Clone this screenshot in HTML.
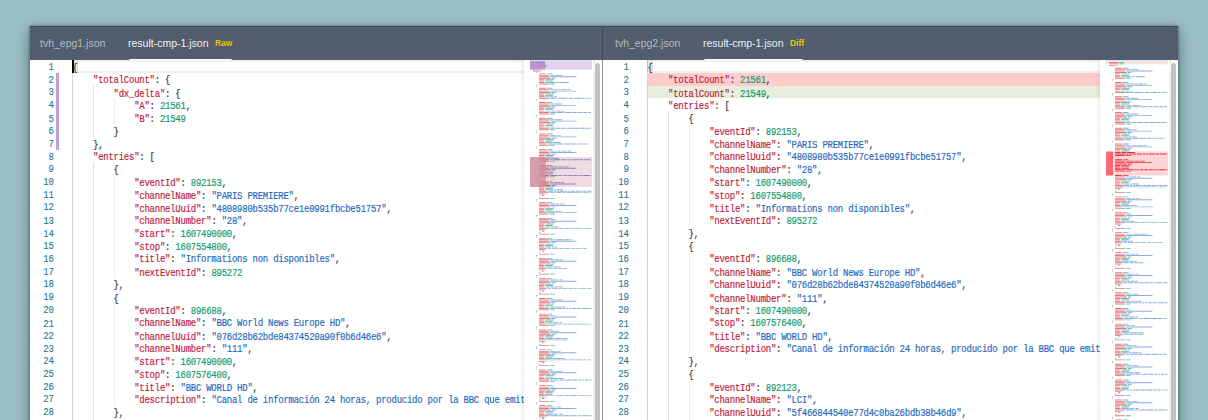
<!DOCTYPE html><html><head><meta charset="utf-8"><style>
*{margin:0;padding:0;box-sizing:border-box}
html,body{width:1208px;height:420px;overflow:hidden;background:#9abec5}
#win{position:absolute;left:30px;top:26px;width:1148px;height:420px;background:#fff;
 box-shadow:0 0 3px rgba(10,30,35,.45),0 5px 12px rgba(10,30,35,.5)}
#hdr{position:absolute;left:0;top:0;width:1148px;height:34px;background:#525e6e;border-top:1px solid #3f4a58}
.tab{position:absolute;top:0;height:34px;font:10.5px "Liberation Sans",sans-serif;line-height:14px;padding-top:9px;white-space:nowrap}
.tab.in{color:#b3b9c1}
.tab.act{color:#eceef0}
.tag{font:bold 8.4px "Liberation Sans",sans-serif;color:#e6c20c;margin-left:6.5px;position:relative;top:-1px}
.uline{position:absolute;top:31.5px;height:3px;background:#fff;border-radius:3px 3px 0 0}
.divd{position:absolute;left:572px;top:0;width:1px;height:34px;background:#3d4653}
.pane{position:absolute;top:34px;height:386px;overflow:hidden}
.lns{position:absolute;left:0;text-align:right;font:9px "Liberation Mono",monospace;letter-spacing:-0.254px;line-height:11.13px;color:#237893;-webkit-text-stroke:0.1px currentColor;transform-origin:0 0;transform:scaleY(1.15)}
.lns div{height:11.13px}
.code{position:absolute;overflow:hidden;font:9px "Liberation Mono",monospace;letter-spacing:-0.254px;line-height:11.43px;white-space:pre;color:#333;height:345px;-webkit-text-stroke:0.15px currentColor;transform-origin:0 0;transform:scaleY(1.12)}
.l{height:11.43px}
.k{color:#c0203a}.s{color:#1f68bd}.n{color:#0f9a6b}.p{color:#333}
.ig{position:absolute;width:1px;height:12.8px}
.g0{background:#d4d4d4}.g1{background:#e2e2e2}.g2{background:#ececec}
.cur{position:absolute;height:12.8px;border-top:2px solid #efefef;border-bottom:2px solid #efefef}
.pur{position:absolute;width:3px;background:#c39fd6}
.brk{position:absolute;width:5.2px;height:12.4px;background:#e1eee1;border-left:1px solid #b9c2b9;border-right:1px solid #d5ddd5}
.csr{position:absolute;top:0;width:2px;height:12.8px;background:#000}
.dbg{position:absolute;height:12.8px}
.mm{position:absolute;top:0}
.sb{position:absolute;top:2.5px;width:5px;height:400px;background:#c3c3c3;border-radius:2.5px}
.sbtrack{position:absolute;top:0;width:2px;height:386px;background:#f3f3f3}
.mmwrap{position:absolute;top:0;height:386px;background:#fff;box-shadow:-2px 0 3px rgba(0,0,0,.08)}
</style></head><body>
<div id="win">
<div id="hdr">
<div class="tab in" style="left:10px">tvh_epg1.json</div>
<div class="tab act" style="left:98px">result-cmp-1.json<span class="tag">Raw</span></div>
<div class="uline" style="left:97.5px;width:105px"></div>
<div class="tab in" style="left:585px">tvh_epg2.json</div>
<div class="tab act" style="left:673px">result-cmp-1.json<span class="tag">Diff</span></div>
<div class="uline" style="left:672.5px;width:101px"></div>
</div>
</div>
<div style="position:absolute;left:0;top:26px;width:1208px;height:394px">
<div class="pane" style="left:30.0px;width:572.0px">
<div class="cur" style="top:0.00px;left:42.4px;width:451.6px"></div>
<div class="pur" style="top:12.80px;height:76.80px;left:26.0px"></div>
<div class="lns" style="top:1.50px;width:23.6px"><div>1</div><div>2</div><div>3</div><div>4</div><div>5</div><div>6</div><div>7</div><div>8</div><div>9</div><div>10</div><div>11</div><div>12</div><div>13</div><div>14</div><div>15</div><div>16</div><div>17</div><div>18</div><div>19</div><div>20</div><div>21</div><div>22</div><div>23</div><div>24</div><div>25</div><div>26</div><div>27</div><div>28</div><div>29</div></div>
<div class="brk" style="top:0.00px;left:42.4px"></div>
<div class="csr" style="left:42.0px"></div>
<div class="ig g0" style="top:12.80px;left:42.4px"></div>
<div class="ig g0" style="top:25.60px;left:42.4px"></div>
<div class="ig g1" style="top:25.60px;left:63.0px"></div>
<div class="ig g0" style="top:38.40px;left:42.4px"></div>
<div class="ig g1" style="top:38.40px;left:63.0px"></div>
<div class="ig g2" style="top:38.40px;left:83.6px"></div>
<div class="ig g0" style="top:51.20px;left:42.4px"></div>
<div class="ig g1" style="top:51.20px;left:63.0px"></div>
<div class="ig g2" style="top:51.20px;left:83.6px"></div>
<div class="ig g0" style="top:64.00px;left:42.4px"></div>
<div class="ig g1" style="top:64.00px;left:63.0px"></div>
<div class="ig g0" style="top:76.80px;left:42.4px"></div>
<div class="ig g0" style="top:89.60px;left:42.4px"></div>
<div class="ig g0" style="top:102.40px;left:42.4px"></div>
<div class="ig g1" style="top:102.40px;left:63.0px"></div>
<div class="ig g0" style="top:115.20px;left:42.4px"></div>
<div class="ig g1" style="top:115.20px;left:63.0px"></div>
<div class="ig g2" style="top:115.20px;left:83.6px"></div>
<div class="ig g0" style="top:128.00px;left:42.4px"></div>
<div class="ig g1" style="top:128.00px;left:63.0px"></div>
<div class="ig g2" style="top:128.00px;left:83.6px"></div>
<div class="ig g0" style="top:140.80px;left:42.4px"></div>
<div class="ig g1" style="top:140.80px;left:63.0px"></div>
<div class="ig g2" style="top:140.80px;left:83.6px"></div>
<div class="ig g0" style="top:153.60px;left:42.4px"></div>
<div class="ig g1" style="top:153.60px;left:63.0px"></div>
<div class="ig g2" style="top:153.60px;left:83.6px"></div>
<div class="ig g0" style="top:166.40px;left:42.4px"></div>
<div class="ig g1" style="top:166.40px;left:63.0px"></div>
<div class="ig g2" style="top:166.40px;left:83.6px"></div>
<div class="ig g0" style="top:179.20px;left:42.4px"></div>
<div class="ig g1" style="top:179.20px;left:63.0px"></div>
<div class="ig g2" style="top:179.20px;left:83.6px"></div>
<div class="ig g0" style="top:192.00px;left:42.4px"></div>
<div class="ig g1" style="top:192.00px;left:63.0px"></div>
<div class="ig g2" style="top:192.00px;left:83.6px"></div>
<div class="ig g0" style="top:204.80px;left:42.4px"></div>
<div class="ig g1" style="top:204.80px;left:63.0px"></div>
<div class="ig g2" style="top:204.80px;left:83.6px"></div>
<div class="ig g0" style="top:217.60px;left:42.4px"></div>
<div class="ig g1" style="top:217.60px;left:63.0px"></div>
<div class="ig g0" style="top:230.40px;left:42.4px"></div>
<div class="ig g1" style="top:230.40px;left:63.0px"></div>
<div class="ig g0" style="top:243.20px;left:42.4px"></div>
<div class="ig g1" style="top:243.20px;left:63.0px"></div>
<div class="ig g2" style="top:243.20px;left:83.6px"></div>
<div class="ig g0" style="top:256.00px;left:42.4px"></div>
<div class="ig g1" style="top:256.00px;left:63.0px"></div>
<div class="ig g2" style="top:256.00px;left:83.6px"></div>
<div class="ig g0" style="top:268.80px;left:42.4px"></div>
<div class="ig g1" style="top:268.80px;left:63.0px"></div>
<div class="ig g2" style="top:268.80px;left:83.6px"></div>
<div class="ig g0" style="top:281.60px;left:42.4px"></div>
<div class="ig g1" style="top:281.60px;left:63.0px"></div>
<div class="ig g2" style="top:281.60px;left:83.6px"></div>
<div class="ig g0" style="top:294.40px;left:42.4px"></div>
<div class="ig g1" style="top:294.40px;left:63.0px"></div>
<div class="ig g2" style="top:294.40px;left:83.6px"></div>
<div class="ig g0" style="top:307.20px;left:42.4px"></div>
<div class="ig g1" style="top:307.20px;left:63.0px"></div>
<div class="ig g2" style="top:307.20px;left:83.6px"></div>
<div class="ig g0" style="top:320.00px;left:42.4px"></div>
<div class="ig g1" style="top:320.00px;left:63.0px"></div>
<div class="ig g2" style="top:320.00px;left:83.6px"></div>
<div class="ig g0" style="top:332.80px;left:42.4px"></div>
<div class="ig g1" style="top:332.80px;left:63.0px"></div>
<div class="ig g2" style="top:332.80px;left:83.6px"></div>
<div class="ig g0" style="top:345.60px;left:42.4px"></div>
<div class="ig g1" style="top:345.60px;left:63.0px"></div>
<div class="ig g0" style="top:358.40px;left:42.4px"></div>
<div class="ig g1" style="top:358.40px;left:63.0px"></div>
<div class="code" style="left:42.4px;width:451.6px;top:2.50px"><div class="l"><span class="p">{</span></div><div class="l">    <span class="k">&quot;totalCount&quot;</span><span class="p">: </span><span class="p">{</span></div><div class="l">        <span class="k">&quot;dx_delta&quot;</span><span class="p">: </span><span class="p">{</span></div><div class="l">            <span class="k">&quot;A&quot;</span><span class="p">: </span><span class="n">21561</span><span class="p">,</span></div><div class="l">            <span class="k">&quot;B&quot;</span><span class="p">: </span><span class="n">21549</span><span class="p"></span></div><div class="l">        <span class="p">}</span></div><div class="l">    <span class="p">},</span></div><div class="l">    <span class="k">&quot;entries&quot;</span><span class="p">: </span><span class="p">[</span></div><div class="l">        <span class="p">{</span></div><div class="l">            <span class="k">&quot;eventId&quot;</span><span class="p">: </span><span class="n">892153</span><span class="p">,</span></div><div class="l">            <span class="k">&quot;channelName&quot;</span><span class="p">: </span><span class="s">&quot;PARIS PREMIERE&quot;</span><span class="p">,</span></div><div class="l">            <span class="k">&quot;channelUuid&quot;</span><span class="p">: </span><span class="s">&quot;4808980b535b77ce1e0991fbcbe51757&quot;</span><span class="p">,</span></div><div class="l">            <span class="k">&quot;channelNumber&quot;</span><span class="p">: </span><span class="s">&quot;28&quot;</span><span class="p">,</span></div><div class="l">            <span class="k">&quot;start&quot;</span><span class="p">: </span><span class="n">1607490000</span><span class="p">,</span></div><div class="l">            <span class="k">&quot;stop&quot;</span><span class="p">: </span><span class="n">1607554800</span><span class="p">,</span></div><div class="l">            <span class="k">&quot;title&quot;</span><span class="p">: </span><span class="s">&quot;Informations non disponibles&quot;</span><span class="p">,</span></div><div class="l">            <span class="k">&quot;nextEventId&quot;</span><span class="p">: </span><span class="n">895272</span><span class="p"></span></div><div class="l">        <span class="p">},</span></div><div class="l">        <span class="p">{</span></div><div class="l">            <span class="k">&quot;eventId&quot;</span><span class="p">: </span><span class="n">896688</span><span class="p">,</span></div><div class="l">            <span class="k">&quot;channelName&quot;</span><span class="p">: </span><span class="s">&quot;BBC World News Europe HD&quot;</span><span class="p">,</span></div><div class="l">            <span class="k">&quot;channelUuid&quot;</span><span class="p">: </span><span class="s">&quot;076d28b62bde84374520a90f0b6d46e6&quot;</span><span class="p">,</span></div><div class="l">            <span class="k">&quot;channelNumber&quot;</span><span class="p">: </span><span class="s">&quot;111&quot;</span><span class="p">,</span></div><div class="l">            <span class="k">&quot;start&quot;</span><span class="p">: </span><span class="n">1607490000</span><span class="p">,</span></div><div class="l">            <span class="k">&quot;stop&quot;</span><span class="p">: </span><span class="n">1607576400</span><span class="p">,</span></div><div class="l">            <span class="k">&quot;title&quot;</span><span class="p">: </span><span class="s">&quot;BBC WORLD HD&quot;</span><span class="p">,</span></div><div class="l">            <span class="k">&quot;description&quot;</span><span class="p">: </span><span class="s">&quot;Canal de información 24 horas, producido por la BBC que emite noticias&quot;</span><span class="p">,</span></div><div class="l">        <span class="p">},</span></div><div class="l">        <span class="p">{</span></div></div>
<div class="mmwrap" style="left:494.0px;width:78.0px"></div>
<div style="position:absolute;left:500.0px;top:0"><svg class="mm" width="62" height="386" viewBox="0 0 62 386"><rect x="0" y="1.00" width="62" height="8.50" fill="#e3d0ea"/><rect x="0" y="97.00" width="62" height="30.00" fill="#f0dde2"/><rect x="0" y="0" width="62" height="1" fill="#cfe6f7"/><path fill="#b3b3b3" d="M0.00 0.60h0.75v0.90h-0.75zM12.00 2.03h0.75v0.90h-0.75zM13.50 2.03h0.75v0.90h-0.75zM13.50 3.46h0.75v0.90h-0.75zM15.00 3.46h0.75v0.90h-0.75zM11.25 4.89h0.75v0.90h-0.75zM16.50 4.89h0.75v0.90h-0.75zM11.25 6.32h0.75v0.90h-0.75zM6.00 7.75h0.75v0.90h-0.75zM3.00 9.18h1.50v0.90h-1.50zM9.75 10.61h0.75v0.90h-0.75zM11.25 10.61h0.75v0.90h-0.75zM6.00 12.04h0.75v0.90h-0.75zM15.75 13.47h0.75v0.90h-0.75zM21.75 13.47h0.75v0.90h-0.75zM18.75 14.90h0.75v0.90h-0.75zM32.25 14.90h0.75v0.90h-0.75zM18.75 16.33h0.75v0.90h-0.75zM45.75 16.33h0.75v0.90h-0.75zM20.25 17.76h0.75v0.90h-0.75zM24.75 17.76h0.75v0.90h-0.75zM14.25 19.19h0.75v0.90h-0.75zM23.25 19.19h0.75v0.90h-0.75zM13.50 20.62h0.75v0.90h-0.75zM22.50 20.62h0.75v0.90h-0.75zM14.25 22.05h0.75v0.90h-0.75zM38.25 22.05h0.75v0.90h-0.75zM18.75 23.48h0.75v0.90h-0.75zM6.00 24.91h1.50v0.90h-1.50zM6.00 26.34h0.75v0.90h-0.75zM15.75 27.77h0.75v0.90h-0.75zM21.75 27.77h0.75v0.90h-0.75zM18.75 29.20h0.75v0.90h-0.75zM39.75 29.20h0.75v0.90h-0.75zM18.75 30.63h0.75v0.90h-0.75zM45.75 30.63h0.75v0.90h-0.75zM20.25 32.06h0.75v0.90h-0.75zM25.50 32.06h0.75v0.90h-0.75zM14.25 33.49h0.75v0.90h-0.75zM23.25 33.49h0.75v0.90h-0.75zM13.50 34.92h0.75v0.90h-0.75zM22.50 34.92h0.75v0.90h-0.75zM14.25 36.35h0.75v0.90h-0.75zM26.25 36.35h0.75v0.90h-0.75zM18.75 37.78h0.75v0.90h-0.75zM6.00 39.21h1.50v0.90h-1.50zM6.00 40.64h0.75v0.90h-0.75zM15.75 42.07h0.75v0.90h-0.75zM21.75 42.07h0.75v0.90h-0.75zM18.75 43.50h0.75v0.90h-0.75zM31.50 43.50h0.75v0.90h-0.75zM18.75 44.93h0.75v0.90h-0.75zM45.75 44.93h0.75v0.90h-0.75zM20.25 46.36h0.75v0.90h-0.75zM24.75 46.36h0.75v0.90h-0.75zM14.25 47.79h0.75v0.90h-0.75zM23.25 47.79h0.75v0.90h-0.75zM13.50 49.22h0.75v0.90h-0.75zM22.50 49.22h0.75v0.90h-0.75zM14.25 50.65h0.75v0.90h-0.75zM33.75 50.65h0.75v0.90h-0.75zM18.75 52.08h0.75v0.90h-0.75zM18.75 53.51h0.75v0.90h-0.75zM6.00 54.94h1.50v0.90h-1.50zM6.00 56.37h0.75v0.90h-0.75zM15.75 57.80h0.75v0.90h-0.75zM21.75 57.80h0.75v0.90h-0.75zM18.75 59.23h0.75v0.90h-0.75zM31.50 59.23h0.75v0.90h-0.75zM18.75 60.66h0.75v0.90h-0.75zM45.75 60.66h0.75v0.90h-0.75zM20.25 62.09h0.75v0.90h-0.75zM25.50 62.09h0.75v0.90h-0.75zM14.25 63.52h0.75v0.90h-0.75zM23.25 63.52h0.75v0.90h-0.75zM13.50 64.95h0.75v0.90h-0.75zM22.50 64.95h0.75v0.90h-0.75zM14.25 66.38h0.75v0.90h-0.75zM23.25 66.38h0.75v0.90h-0.75zM18.75 67.81h0.75v0.90h-0.75zM18.75 69.24h0.75v0.90h-0.75zM6.00 70.67h1.50v0.90h-1.50zM6.00 72.10h0.75v0.90h-0.75zM15.75 73.53h0.75v0.90h-0.75zM21.75 73.53h0.75v0.90h-0.75zM18.75 74.96h0.75v0.90h-0.75zM30.00 74.96h0.75v0.90h-0.75zM18.75 76.39h0.75v0.90h-0.75zM45.75 76.39h0.75v0.90h-0.75zM20.25 77.82h0.75v0.90h-0.75zM25.50 77.82h0.75v0.90h-0.75zM14.25 79.25h0.75v0.90h-0.75zM23.25 79.25h0.75v0.90h-0.75zM13.50 80.68h0.75v0.90h-0.75zM22.50 80.68h0.75v0.90h-0.75zM14.25 82.11h0.75v0.90h-0.75zM30.00 82.11h0.75v0.90h-0.75zM16.50 83.54h0.75v0.90h-0.75zM57.75 83.54h0.75v0.90h-0.75zM18.75 84.97h0.75v0.90h-0.75zM6.00 86.40h1.50v0.90h-1.50zM6.00 87.83h0.75v0.90h-0.75zM15.75 89.26h0.75v0.90h-0.75zM21.75 89.26h0.75v0.90h-0.75zM18.75 90.69h0.75v0.90h-0.75zM40.50 90.69h0.75v0.90h-0.75zM18.75 92.12h0.75v0.90h-0.75zM45.75 92.12h0.75v0.90h-0.75zM20.25 93.55h0.75v0.90h-0.75zM25.50 93.55h0.75v0.90h-0.75zM14.25 94.98h0.75v0.90h-0.75zM23.25 94.98h0.75v0.90h-0.75zM13.50 96.41h0.75v0.90h-0.75zM22.50 96.41h0.75v0.90h-0.75zM13.50 127.87h0.75v0.90h-0.75zM22.50 127.87h0.75v0.90h-0.75zM14.25 129.30h0.75v0.90h-0.75zM32.25 129.30h0.75v0.90h-0.75zM16.50 130.73h0.75v0.90h-0.75zM18.75 132.16h0.75v0.90h-0.75zM14.25 133.59h0.75v0.90h-0.75zM15.75 133.59h0.75v0.90h-0.75zM9.00 136.45h1.50v0.90h-1.50zM18.75 137.88h0.75v0.90h-0.75zM6.00 139.31h1.50v0.90h-1.50zM6.00 140.74h0.75v0.90h-0.75zM15.75 142.17h0.75v0.90h-0.75zM21.75 142.17h0.75v0.90h-0.75zM18.75 143.60h0.75v0.90h-0.75zM33.75 143.60h0.75v0.90h-0.75zM18.75 145.03h0.75v0.90h-0.75zM45.75 145.03h0.75v0.90h-0.75zM20.25 146.46h0.75v0.90h-0.75zM24.75 146.46h0.75v0.90h-0.75zM14.25 147.89h0.75v0.90h-0.75zM23.25 147.89h0.75v0.90h-0.75zM13.50 149.32h0.75v0.90h-0.75zM22.50 149.32h0.75v0.90h-0.75zM14.25 150.75h0.75v0.90h-0.75zM30.75 150.75h0.75v0.90h-0.75zM16.50 152.18h0.75v0.90h-0.75zM46.50 152.18h0.75v0.90h-0.75zM18.75 153.61h0.75v0.90h-0.75zM6.00 155.04h1.50v0.90h-1.50zM6.00 156.47h0.75v0.90h-0.75zM15.75 157.90h0.75v0.90h-0.75zM21.75 157.90h0.75v0.90h-0.75zM18.75 159.33h0.75v0.90h-0.75zM24.75 159.33h0.75v0.90h-0.75zM18.75 160.76h0.75v0.90h-0.75zM45.75 160.76h0.75v0.90h-0.75zM20.25 162.19h0.75v0.90h-0.75zM25.50 162.19h0.75v0.90h-0.75zM14.25 163.62h0.75v0.90h-0.75zM23.25 163.62h0.75v0.90h-0.75zM13.50 165.05h0.75v0.90h-0.75zM22.50 165.05h0.75v0.90h-0.75zM14.25 166.48h0.75v0.90h-0.75zM27.75 166.48h0.75v0.90h-0.75zM18.75 167.91h0.75v0.90h-0.75zM14.25 169.34h0.75v0.90h-0.75zM15.75 169.34h0.75v0.90h-0.75zM9.00 172.20h1.50v0.90h-1.50zM18.75 173.63h0.75v0.90h-0.75zM6.00 175.06h1.50v0.90h-1.50zM6.00 176.49h0.75v0.90h-0.75zM15.75 177.92h0.75v0.90h-0.75zM21.75 177.92h0.75v0.90h-0.75zM18.75 179.35h0.75v0.90h-0.75zM41.25 179.35h0.75v0.90h-0.75zM18.75 180.78h0.75v0.90h-0.75zM45.75 180.78h0.75v0.90h-0.75zM20.25 182.21h0.75v0.90h-0.75zM25.50 182.21h0.75v0.90h-0.75zM14.25 183.64h0.75v0.90h-0.75zM23.25 183.64h0.75v0.90h-0.75zM13.50 185.07h0.75v0.90h-0.75zM22.50 185.07h0.75v0.90h-0.75zM14.25 186.50h0.75v0.90h-0.75zM26.25 186.50h0.75v0.90h-0.75zM16.50 187.93h0.75v0.90h-0.75zM56.25 187.93h0.75v0.90h-0.75zM14.25 189.36h0.75v0.90h-0.75zM15.75 189.36h0.75v0.90h-0.75zM9.00 192.22h1.50v0.90h-1.50zM18.75 193.65h0.75v0.90h-0.75zM6.00 195.08h1.50v0.90h-1.50zM6.00 196.51h0.75v0.90h-0.75zM15.75 197.94h0.75v0.90h-0.75zM21.75 197.94h0.75v0.90h-0.75zM18.75 199.37h0.75v0.90h-0.75zM32.25 199.37h0.75v0.90h-0.75zM18.75 200.80h0.75v0.90h-0.75zM45.75 200.80h0.75v0.90h-0.75zM20.25 202.23h0.75v0.90h-0.75zM24.75 202.23h0.75v0.90h-0.75zM14.25 203.66h0.75v0.90h-0.75zM23.25 203.66h0.75v0.90h-0.75zM13.50 205.09h0.75v0.90h-0.75zM22.50 205.09h0.75v0.90h-0.75zM14.25 206.52h0.75v0.90h-0.75zM30.00 206.52h0.75v0.90h-0.75zM16.50 207.95h0.75v0.90h-0.75zM36.75 207.95h0.75v0.90h-0.75zM14.25 209.38h0.75v0.90h-0.75zM15.75 209.38h0.75v0.90h-0.75zM9.00 212.24h1.50v0.90h-1.50zM18.75 213.67h0.75v0.90h-0.75zM6.00 215.10h1.50v0.90h-1.50zM6.00 216.53h0.75v0.90h-0.75zM15.75 217.96h0.75v0.90h-0.75zM21.75 217.96h0.75v0.90h-0.75zM18.75 219.39h0.75v0.90h-0.75zM32.25 219.39h0.75v0.90h-0.75zM18.75 220.82h0.75v0.90h-0.75zM45.75 220.82h0.75v0.90h-0.75zM20.25 222.25h0.75v0.90h-0.75zM25.50 222.25h0.75v0.90h-0.75zM14.25 223.68h0.75v0.90h-0.75zM23.25 223.68h0.75v0.90h-0.75zM13.50 225.11h0.75v0.90h-0.75zM22.50 225.11h0.75v0.90h-0.75zM14.25 226.54h0.75v0.90h-0.75zM31.50 226.54h0.75v0.90h-0.75zM16.50 227.97h0.75v0.90h-0.75zM60.75 227.97h0.75v0.90h-0.75zM14.25 229.40h0.75v0.90h-0.75zM15.75 229.40h0.75v0.90h-0.75zM9.00 232.26h1.50v0.90h-1.50zM18.75 233.69h0.75v0.90h-0.75zM6.00 235.12h1.50v0.90h-1.50zM6.00 236.55h0.75v0.90h-0.75zM15.75 237.98h0.75v0.90h-0.75zM21.75 237.98h0.75v0.90h-0.75zM18.75 239.41h0.75v0.90h-0.75zM32.25 239.41h0.75v0.90h-0.75zM18.75 240.84h0.75v0.90h-0.75zM45.75 240.84h0.75v0.90h-0.75zM20.25 242.27h0.75v0.90h-0.75zM24.75 242.27h0.75v0.90h-0.75zM14.25 243.70h0.75v0.90h-0.75zM23.25 243.70h0.75v0.90h-0.75zM13.50 245.13h0.75v0.90h-0.75zM22.50 245.13h0.75v0.90h-0.75zM14.25 246.56h0.75v0.90h-0.75zM34.50 246.56h0.75v0.90h-0.75zM18.75 247.99h0.75v0.90h-0.75zM18.75 249.42h0.75v0.90h-0.75zM6.00 250.85h1.50v0.90h-1.50zM6.00 252.28h0.75v0.90h-0.75zM15.75 253.71h0.75v0.90h-0.75zM21.75 253.71h0.75v0.90h-0.75zM18.75 255.14h0.75v0.90h-0.75zM24.75 255.14h0.75v0.90h-0.75zM18.75 256.57h0.75v0.90h-0.75zM45.75 256.57h0.75v0.90h-0.75zM20.25 258.00h0.75v0.90h-0.75zM25.50 258.00h0.75v0.90h-0.75zM14.25 259.43h0.75v0.90h-0.75zM23.25 259.43h0.75v0.90h-0.75zM13.50 260.86h0.75v0.90h-0.75zM22.50 260.86h0.75v0.90h-0.75zM14.25 262.29h0.75v0.90h-0.75zM31.50 262.29h0.75v0.90h-0.75zM16.50 263.72h0.75v0.90h-0.75zM18.75 265.15h0.75v0.90h-0.75zM6.00 266.58h1.50v0.90h-1.50zM6.00 268.01h0.75v0.90h-0.75zM15.75 269.44h0.75v0.90h-0.75zM21.75 269.44h0.75v0.90h-0.75zM18.75 270.87h0.75v0.90h-0.75zM28.50 270.87h0.75v0.90h-0.75zM18.75 272.30h0.75v0.90h-0.75zM45.75 272.30h0.75v0.90h-0.75zM20.25 273.73h0.75v0.90h-0.75zM25.50 273.73h0.75v0.90h-0.75zM14.25 275.16h0.75v0.90h-0.75zM23.25 275.16h0.75v0.90h-0.75zM13.50 276.59h0.75v0.90h-0.75zM22.50 276.59h0.75v0.90h-0.75zM14.25 278.02h0.75v0.90h-0.75zM36.75 278.02h0.75v0.90h-0.75zM16.50 279.45h0.75v0.90h-0.75zM36.75 279.45h0.75v0.90h-0.75zM14.25 280.88h0.75v0.90h-0.75zM15.75 280.88h0.75v0.90h-0.75zM9.00 283.74h1.50v0.90h-1.50zM18.75 285.17h0.75v0.90h-0.75zM6.00 286.60h1.50v0.90h-1.50zM6.00 288.03h0.75v0.90h-0.75zM15.75 289.46h0.75v0.90h-0.75zM21.75 289.46h0.75v0.90h-0.75zM18.75 290.89h0.75v0.90h-0.75zM30.00 290.89h0.75v0.90h-0.75zM18.75 292.32h0.75v0.90h-0.75zM45.75 292.32h0.75v0.90h-0.75zM20.25 293.75h0.75v0.90h-0.75zM25.50 293.75h0.75v0.90h-0.75zM14.25 295.18h0.75v0.90h-0.75zM23.25 295.18h0.75v0.90h-0.75zM13.50 296.61h0.75v0.90h-0.75zM22.50 296.61h0.75v0.90h-0.75zM14.25 298.04h0.75v0.90h-0.75zM34.50 298.04h0.75v0.90h-0.75zM18.75 299.47h0.75v0.90h-0.75zM14.25 300.90h0.75v0.90h-0.75zM15.75 300.90h0.75v0.90h-0.75zM9.00 303.76h1.50v0.90h-1.50zM18.75 305.19h0.75v0.90h-0.75zM6.00 306.62h1.50v0.90h-1.50zM6.00 308.05h0.75v0.90h-0.75zM15.75 309.48h0.75v0.90h-0.75zM21.75 309.48h0.75v0.90h-0.75zM18.75 310.91h0.75v0.90h-0.75zM31.50 310.91h0.75v0.90h-0.75zM18.75 312.34h0.75v0.90h-0.75zM45.75 312.34h0.75v0.90h-0.75zM20.25 313.77h0.75v0.90h-0.75zM25.50 313.77h0.75v0.90h-0.75zM14.25 315.20h0.75v0.90h-0.75zM23.25 315.20h0.75v0.90h-0.75zM13.50 316.63h0.75v0.90h-0.75zM22.50 316.63h0.75v0.90h-0.75zM14.25 318.06h0.75v0.90h-0.75zM33.00 318.06h0.75v0.90h-0.75zM18.75 319.49h0.75v0.90h-0.75zM18.75 320.92h0.75v0.90h-0.75zM6.00 322.35h1.50v0.90h-1.50zM6.00 323.78h0.75v0.90h-0.75zM15.75 325.21h0.75v0.90h-0.75zM21.75 325.21h0.75v0.90h-0.75zM18.75 326.64h0.75v0.90h-0.75zM24.00 326.64h0.75v0.90h-0.75zM18.75 328.07h0.75v0.90h-0.75zM45.75 328.07h0.75v0.90h-0.75zM20.25 329.50h0.75v0.90h-0.75zM25.50 329.50h0.75v0.90h-0.75zM14.25 330.93h0.75v0.90h-0.75zM23.25 330.93h0.75v0.90h-0.75zM13.50 332.36h0.75v0.90h-0.75zM22.50 332.36h0.75v0.90h-0.75zM14.25 333.79h0.75v0.90h-0.75zM21.75 333.79h0.75v0.90h-0.75zM18.75 335.22h0.75v0.90h-0.75zM14.25 336.65h0.75v0.90h-0.75zM15.75 336.65h0.75v0.90h-0.75zM9.00 339.51h1.50v0.90h-1.50zM18.75 340.94h0.75v0.90h-0.75zM6.00 342.37h1.50v0.90h-1.50zM6.00 343.80h0.75v0.90h-0.75zM15.75 345.23h0.75v0.90h-0.75zM21.75 345.23h0.75v0.90h-0.75zM18.75 346.66h0.75v0.90h-0.75zM30.75 346.66h0.75v0.90h-0.75zM18.75 348.09h0.75v0.90h-0.75zM45.75 348.09h0.75v0.90h-0.75zM20.25 349.52h0.75v0.90h-0.75zM25.50 349.52h0.75v0.90h-0.75zM14.25 350.95h0.75v0.90h-0.75zM23.25 350.95h0.75v0.90h-0.75zM13.50 352.38h0.75v0.90h-0.75zM22.50 352.38h0.75v0.90h-0.75zM14.25 353.81h0.75v0.90h-0.75zM32.25 353.81h0.75v0.90h-0.75zM18.75 355.24h0.75v0.90h-0.75zM14.25 356.67h0.75v0.90h-0.75zM15.75 356.67h0.75v0.90h-0.75zM9.00 359.53h1.50v0.90h-1.50zM18.75 360.96h0.75v0.90h-0.75zM6.00 362.39h1.50v0.90h-1.50zM6.00 363.82h0.75v0.90h-0.75zM15.75 365.25h0.75v0.90h-0.75zM21.75 365.25h0.75v0.90h-0.75zM18.75 366.68h0.75v0.90h-0.75zM41.25 366.68h0.75v0.90h-0.75zM18.75 368.11h0.75v0.90h-0.75zM45.75 368.11h0.75v0.90h-0.75zM20.25 369.54h0.75v0.90h-0.75zM24.75 369.54h0.75v0.90h-0.75zM14.25 370.97h0.75v0.90h-0.75zM23.25 370.97h0.75v0.90h-0.75zM13.50 372.40h0.75v0.90h-0.75zM22.50 372.40h0.75v0.90h-0.75zM14.25 373.83h0.75v0.90h-0.75zM39.75 373.83h0.75v0.90h-0.75zM18.75 375.26h0.75v0.90h-0.75zM18.75 376.69h0.75v0.90h-0.75zM6.00 378.12h1.50v0.90h-1.50zM6.00 379.55h0.75v0.90h-0.75zM15.75 380.98h0.75v0.90h-0.75zM21.75 380.98h0.75v0.90h-0.75zM18.75 382.41h0.75v0.90h-0.75zM33.00 382.41h0.75v0.90h-0.75zM18.75 383.84h0.75v0.90h-0.75zM45.75 383.84h0.75v0.90h-0.75zM20.25 385.27h0.75v0.90h-0.75zM25.50 385.27h0.75v0.90h-0.75z"/><path fill="#e27883" d="M3.00 2.03h9.00v0.90h-9.00zM6.00 3.46h7.50v0.90h-7.50zM9.00 4.89h2.25v0.90h-2.25zM9.00 6.32h2.25v0.90h-2.25zM3.00 10.61h6.75v0.90h-6.75zM9.00 13.47h6.75v0.90h-6.75zM9.00 14.90h9.75v0.90h-9.75zM9.00 16.33h9.75v0.90h-9.75zM9.00 17.76h11.25v0.90h-11.25zM9.00 19.19h5.25v0.90h-5.25zM9.00 20.62h4.50v0.90h-4.50zM9.00 22.05h5.25v0.90h-5.25zM9.00 23.48h9.75v0.90h-9.75zM9.00 27.77h6.75v0.90h-6.75zM9.00 29.20h9.75v0.90h-9.75zM9.00 30.63h9.75v0.90h-9.75zM9.00 32.06h11.25v0.90h-11.25zM9.00 33.49h5.25v0.90h-5.25zM9.00 34.92h4.50v0.90h-4.50zM9.00 36.35h5.25v0.90h-5.25zM9.00 37.78h9.75v0.90h-9.75zM9.00 42.07h6.75v0.90h-6.75zM9.00 43.50h9.75v0.90h-9.75zM9.00 44.93h9.75v0.90h-9.75zM9.00 46.36h11.25v0.90h-11.25zM9.00 47.79h5.25v0.90h-5.25zM9.00 49.22h4.50v0.90h-4.50zM9.00 50.65h5.25v0.90h-5.25zM9.00 52.08h9.75v0.90h-9.75zM9.00 53.51h9.75v0.90h-9.75zM9.00 57.80h6.75v0.90h-6.75zM9.00 59.23h9.75v0.90h-9.75zM9.00 60.66h9.75v0.90h-9.75zM9.00 62.09h11.25v0.90h-11.25zM9.00 63.52h5.25v0.90h-5.25zM9.00 64.95h4.50v0.90h-4.50zM9.00 66.38h5.25v0.90h-5.25zM9.00 67.81h9.75v0.90h-9.75zM9.00 69.24h9.75v0.90h-9.75zM9.00 73.53h6.75v0.90h-6.75zM9.00 74.96h9.75v0.90h-9.75zM9.00 76.39h9.75v0.90h-9.75zM9.00 77.82h11.25v0.90h-11.25zM9.00 79.25h5.25v0.90h-5.25zM9.00 80.68h4.50v0.90h-4.50zM9.00 82.11h5.25v0.90h-5.25zM9.00 83.54h7.50v0.90h-7.50zM9.00 84.97h9.75v0.90h-9.75zM9.00 89.26h6.75v0.90h-6.75zM9.00 90.69h9.75v0.90h-9.75zM9.00 92.12h9.75v0.90h-9.75zM9.00 93.55h11.25v0.90h-11.25zM9.00 94.98h5.25v0.90h-5.25zM9.00 96.41h4.50v0.90h-4.50zM9.00 127.87h4.50v0.90h-4.50zM9.00 129.30h5.25v0.90h-5.25zM9.00 130.73h7.50v0.90h-7.50zM9.00 132.16h9.75v0.90h-9.75zM9.00 133.59h5.25v0.90h-5.25zM9.00 137.88h9.75v0.90h-9.75zM9.00 142.17h6.75v0.90h-6.75zM9.00 143.60h9.75v0.90h-9.75zM9.00 145.03h9.75v0.90h-9.75zM9.00 146.46h11.25v0.90h-11.25zM9.00 147.89h5.25v0.90h-5.25zM9.00 149.32h4.50v0.90h-4.50zM9.00 150.75h5.25v0.90h-5.25zM9.00 152.18h7.50v0.90h-7.50zM9.00 153.61h9.75v0.90h-9.75zM9.00 157.90h6.75v0.90h-6.75zM9.00 159.33h9.75v0.90h-9.75zM9.00 160.76h9.75v0.90h-9.75zM9.00 162.19h11.25v0.90h-11.25zM9.00 163.62h5.25v0.90h-5.25zM9.00 165.05h4.50v0.90h-4.50zM9.00 166.48h5.25v0.90h-5.25zM9.00 167.91h9.75v0.90h-9.75zM9.00 169.34h5.25v0.90h-5.25zM9.00 173.63h9.75v0.90h-9.75zM9.00 177.92h6.75v0.90h-6.75zM9.00 179.35h9.75v0.90h-9.75zM9.00 180.78h9.75v0.90h-9.75zM9.00 182.21h11.25v0.90h-11.25zM9.00 183.64h5.25v0.90h-5.25zM9.00 185.07h4.50v0.90h-4.50zM9.00 186.50h5.25v0.90h-5.25zM9.00 187.93h7.50v0.90h-7.50zM9.00 189.36h5.25v0.90h-5.25zM9.00 193.65h9.75v0.90h-9.75zM9.00 197.94h6.75v0.90h-6.75zM9.00 199.37h9.75v0.90h-9.75zM9.00 200.80h9.75v0.90h-9.75zM9.00 202.23h11.25v0.90h-11.25zM9.00 203.66h5.25v0.90h-5.25zM9.00 205.09h4.50v0.90h-4.50zM9.00 206.52h5.25v0.90h-5.25zM9.00 207.95h7.50v0.90h-7.50zM9.00 209.38h5.25v0.90h-5.25zM9.00 213.67h9.75v0.90h-9.75zM9.00 217.96h6.75v0.90h-6.75zM9.00 219.39h9.75v0.90h-9.75zM9.00 220.82h9.75v0.90h-9.75zM9.00 222.25h11.25v0.90h-11.25zM9.00 223.68h5.25v0.90h-5.25zM9.00 225.11h4.50v0.90h-4.50zM9.00 226.54h5.25v0.90h-5.25zM9.00 227.97h7.50v0.90h-7.50zM9.00 229.40h5.25v0.90h-5.25zM9.00 233.69h9.75v0.90h-9.75zM9.00 237.98h6.75v0.90h-6.75zM9.00 239.41h9.75v0.90h-9.75zM9.00 240.84h9.75v0.90h-9.75zM9.00 242.27h11.25v0.90h-11.25zM9.00 243.70h5.25v0.90h-5.25zM9.00 245.13h4.50v0.90h-4.50zM9.00 246.56h5.25v0.90h-5.25zM9.00 247.99h9.75v0.90h-9.75zM9.00 249.42h9.75v0.90h-9.75zM9.00 253.71h6.75v0.90h-6.75zM9.00 255.14h9.75v0.90h-9.75zM9.00 256.57h9.75v0.90h-9.75zM9.00 258.00h11.25v0.90h-11.25zM9.00 259.43h5.25v0.90h-5.25zM9.00 260.86h4.50v0.90h-4.50zM9.00 262.29h5.25v0.90h-5.25zM9.00 263.72h7.50v0.90h-7.50zM9.00 265.15h9.75v0.90h-9.75zM9.00 269.44h6.75v0.90h-6.75zM9.00 270.87h9.75v0.90h-9.75zM9.00 272.30h9.75v0.90h-9.75zM9.00 273.73h11.25v0.90h-11.25zM9.00 275.16h5.25v0.90h-5.25zM9.00 276.59h4.50v0.90h-4.50zM9.00 278.02h5.25v0.90h-5.25zM9.00 279.45h7.50v0.90h-7.50zM9.00 280.88h5.25v0.90h-5.25zM9.00 285.17h9.75v0.90h-9.75zM9.00 289.46h6.75v0.90h-6.75zM9.00 290.89h9.75v0.90h-9.75zM9.00 292.32h9.75v0.90h-9.75zM9.00 293.75h11.25v0.90h-11.25zM9.00 295.18h5.25v0.90h-5.25zM9.00 296.61h4.50v0.90h-4.50zM9.00 298.04h5.25v0.90h-5.25zM9.00 299.47h9.75v0.90h-9.75zM9.00 300.90h5.25v0.90h-5.25zM9.00 305.19h9.75v0.90h-9.75zM9.00 309.48h6.75v0.90h-6.75zM9.00 310.91h9.75v0.90h-9.75zM9.00 312.34h9.75v0.90h-9.75zM9.00 313.77h11.25v0.90h-11.25zM9.00 315.20h5.25v0.90h-5.25zM9.00 316.63h4.50v0.90h-4.50zM9.00 318.06h5.25v0.90h-5.25zM9.00 319.49h9.75v0.90h-9.75zM9.00 320.92h9.75v0.90h-9.75zM9.00 325.21h6.75v0.90h-6.75zM9.00 326.64h9.75v0.90h-9.75zM9.00 328.07h9.75v0.90h-9.75zM9.00 329.50h11.25v0.90h-11.25zM9.00 330.93h5.25v0.90h-5.25zM9.00 332.36h4.50v0.90h-4.50zM9.00 333.79h5.25v0.90h-5.25zM9.00 335.22h9.75v0.90h-9.75zM9.00 336.65h5.25v0.90h-5.25zM9.00 340.94h9.75v0.90h-9.75zM9.00 345.23h6.75v0.90h-6.75zM9.00 346.66h9.75v0.90h-9.75zM9.00 348.09h9.75v0.90h-9.75zM9.00 349.52h11.25v0.90h-11.25zM9.00 350.95h5.25v0.90h-5.25zM9.00 352.38h4.50v0.90h-4.50zM9.00 353.81h5.25v0.90h-5.25zM9.00 355.24h9.75v0.90h-9.75zM9.00 356.67h5.25v0.90h-5.25zM9.00 360.96h9.75v0.90h-9.75zM9.00 365.25h6.75v0.90h-6.75zM9.00 366.68h9.75v0.90h-9.75zM9.00 368.11h9.75v0.90h-9.75zM9.00 369.54h11.25v0.90h-11.25zM9.00 370.97h5.25v0.90h-5.25zM9.00 372.40h4.50v0.90h-4.50zM9.00 373.83h5.25v0.90h-5.25zM9.00 375.26h9.75v0.90h-9.75zM9.00 376.69h9.75v0.90h-9.75zM9.00 380.98h6.75v0.90h-6.75zM9.00 382.41h9.75v0.90h-9.75zM9.00 383.84h9.75v0.90h-9.75zM9.00 385.27h11.25v0.90h-11.25z"/><path fill="#5cbf98" d="M12.75 4.89h3.75v0.90h-3.75zM12.75 6.32h3.75v0.90h-3.75zM17.25 13.47h4.50v0.90h-4.50zM15.75 19.19h7.50v0.90h-7.50zM15.00 20.62h7.50v0.90h-7.50zM20.25 23.48h4.50v0.90h-4.50zM17.25 27.77h4.50v0.90h-4.50zM15.75 33.49h7.50v0.90h-7.50zM15.00 34.92h7.50v0.90h-7.50zM17.25 42.07h4.50v0.90h-4.50zM15.75 47.79h7.50v0.90h-7.50zM15.00 49.22h7.50v0.90h-7.50zM20.25 53.51h4.50v0.90h-4.50zM17.25 57.80h4.50v0.90h-4.50zM15.75 63.52h7.50v0.90h-7.50zM15.00 64.95h7.50v0.90h-7.50zM20.25 69.24h4.50v0.90h-4.50zM17.25 73.53h4.50v0.90h-4.50zM15.75 79.25h7.50v0.90h-7.50zM15.00 80.68h7.50v0.90h-7.50zM20.25 84.97h4.50v0.90h-4.50zM17.25 89.26h4.50v0.90h-4.50zM15.75 94.98h7.50v0.90h-7.50zM15.00 96.41h7.50v0.90h-7.50zM15.00 127.87h7.50v0.90h-7.50zM12.00 135.02h1.50v0.90h-1.50zM20.25 137.88h4.50v0.90h-4.50zM17.25 142.17h4.50v0.90h-4.50zM15.75 147.89h7.50v0.90h-7.50zM15.00 149.32h7.50v0.90h-7.50zM20.25 153.61h4.50v0.90h-4.50zM17.25 157.90h4.50v0.90h-4.50zM15.75 163.62h7.50v0.90h-7.50zM15.00 165.05h7.50v0.90h-7.50zM12.00 170.77h2.25v0.90h-2.25zM20.25 173.63h4.50v0.90h-4.50zM17.25 177.92h4.50v0.90h-4.50zM15.75 183.64h7.50v0.90h-7.50zM15.00 185.07h7.50v0.90h-7.50zM12.00 190.79h2.25v0.90h-2.25zM20.25 193.65h4.50v0.90h-4.50zM17.25 197.94h4.50v0.90h-4.50zM15.75 203.66h7.50v0.90h-7.50zM15.00 205.09h7.50v0.90h-7.50zM12.00 210.81h1.50v0.90h-1.50zM20.25 213.67h4.50v0.90h-4.50zM17.25 217.96h4.50v0.90h-4.50zM15.75 223.68h7.50v0.90h-7.50zM15.00 225.11h7.50v0.90h-7.50zM12.00 230.83h2.25v0.90h-2.25zM20.25 233.69h4.50v0.90h-4.50zM17.25 237.98h4.50v0.90h-4.50zM15.75 243.70h7.50v0.90h-7.50zM15.00 245.13h7.50v0.90h-7.50zM20.25 249.42h4.50v0.90h-4.50zM17.25 253.71h4.50v0.90h-4.50zM15.75 259.43h7.50v0.90h-7.50zM15.00 260.86h7.50v0.90h-7.50zM20.25 265.15h4.50v0.90h-4.50zM17.25 269.44h4.50v0.90h-4.50zM15.75 275.16h7.50v0.90h-7.50zM15.00 276.59h7.50v0.90h-7.50zM12.00 282.31h1.50v0.90h-1.50zM20.25 285.17h4.50v0.90h-4.50zM17.25 289.46h4.50v0.90h-4.50zM15.75 295.18h7.50v0.90h-7.50zM15.00 296.61h7.50v0.90h-7.50zM12.00 302.33h2.25v0.90h-2.25zM20.25 305.19h4.50v0.90h-4.50zM17.25 309.48h4.50v0.90h-4.50zM15.75 315.20h7.50v0.90h-7.50zM15.00 316.63h7.50v0.90h-7.50zM20.25 320.92h4.50v0.90h-4.50zM17.25 325.21h4.50v0.90h-4.50zM15.75 330.93h7.50v0.90h-7.50zM15.00 332.36h7.50v0.90h-7.50zM12.00 338.08h2.25v0.90h-2.25zM20.25 340.94h4.50v0.90h-4.50zM17.25 345.23h4.50v0.90h-4.50zM15.75 350.95h7.50v0.90h-7.50zM15.00 352.38h7.50v0.90h-7.50zM12.00 358.10h2.25v0.90h-2.25zM20.25 360.96h4.50v0.90h-4.50zM17.25 365.25h4.50v0.90h-4.50zM15.75 370.97h7.50v0.90h-7.50zM15.00 372.40h7.50v0.90h-7.50zM20.25 376.69h4.50v0.90h-4.50zM17.25 380.98h4.50v0.90h-4.50z"/><path fill="#86aede" d="M20.25 14.90h4.50v0.90h-4.50zM25.50 14.90h6.75v0.90h-6.75zM20.25 16.33h25.50v0.90h-25.50zM21.75 17.76h3.00v0.90h-3.00zM15.75 22.05h9.75v0.90h-9.75zM26.25 22.05h2.25v0.90h-2.25zM29.25 22.05h9.00v0.90h-9.00zM20.25 29.20h3.00v0.90h-3.00zM24.00 29.20h3.75v0.90h-3.75zM28.50 29.20h3.00v0.90h-3.00zM32.25 29.20h4.50v0.90h-4.50zM37.50 29.20h2.25v0.90h-2.25zM20.25 30.63h25.50v0.90h-25.50zM21.75 32.06h3.75v0.90h-3.75zM15.75 36.35h3.00v0.90h-3.00zM19.50 36.35h3.75v0.90h-3.75zM24.00 36.35h2.25v0.90h-2.25zM20.25 37.78h4.50v0.90h-4.50zM25.50 37.78h1.50v0.90h-1.50zM27.75 37.78h8.25v0.90h-8.25zM36.75 37.78h1.50v0.90h-1.50zM39.00 37.78h4.50v0.90h-4.50zM44.25 37.78h6.75v0.90h-6.75zM51.75 37.78h2.25v0.90h-2.25zM54.75 37.78h1.50v0.90h-1.50zM57.00 37.78h2.25v0.90h-2.25zM60.00 37.78h1.50v0.90h-1.50zM20.25 43.50h3.75v0.90h-3.75zM24.75 43.50h6.75v0.90h-6.75zM20.25 44.93h25.50v0.90h-25.50zM21.75 46.36h3.00v0.90h-3.00zM15.75 50.65h3.00v0.90h-3.00zM19.50 50.65h1.50v0.90h-1.50zM21.75 50.65h3.75v0.90h-3.75zM26.25 50.65h7.50v0.90h-7.50zM20.25 52.08h6.00v0.90h-6.00zM27.00 52.08h6.75v0.90h-6.75zM34.50 52.08h6.75v0.90h-6.75zM42.00 52.08h5.25v0.90h-5.25zM48.00 52.08h4.50v0.90h-4.50zM53.25 52.08h3.75v0.90h-3.75zM57.75 52.08h3.00v0.90h-3.00zM20.25 59.23h3.75v0.90h-3.75zM24.75 59.23h6.75v0.90h-6.75zM20.25 60.66h25.50v0.90h-25.50zM21.75 62.09h3.75v0.90h-3.75zM15.75 66.38h3.75v0.90h-3.75zM20.25 66.38h3.00v0.90h-3.00zM20.25 67.81h3.75v0.90h-3.75zM24.75 67.81h6.00v0.90h-6.00zM31.50 67.81h4.50v0.90h-4.50zM36.75 67.81h6.00v0.90h-6.00zM43.50 67.81h5.25v0.90h-5.25zM49.50 67.81h6.00v0.90h-6.00zM56.25 67.81h3.75v0.90h-3.75zM60.75 67.81h0.75v0.90h-0.75zM20.25 74.96h5.25v0.90h-5.25zM26.25 74.96h1.50v0.90h-1.50zM28.50 74.96h1.50v0.90h-1.50zM20.25 76.39h25.50v0.90h-25.50zM21.75 77.82h3.75v0.90h-3.75zM15.75 82.11h6.00v0.90h-6.00zM22.50 82.11h7.50v0.90h-7.50zM18.00 83.54h7.50v0.90h-7.50zM26.25 83.54h6.75v0.90h-6.75zM33.75 83.54h6.75v0.90h-6.75zM41.25 83.54h4.50v0.90h-4.50zM46.50 83.54h2.25v0.90h-2.25zM49.50 83.54h3.00v0.90h-3.00zM53.25 83.54h2.25v0.90h-2.25zM56.25 83.54h1.50v0.90h-1.50zM20.25 90.69h3.75v0.90h-3.75zM24.75 90.69h1.50v0.90h-1.50zM27.00 90.69h3.75v0.90h-3.75zM31.50 90.69h5.25v0.90h-5.25zM37.50 90.69h3.00v0.90h-3.00zM20.25 92.12h25.50v0.90h-25.50zM21.75 93.55h3.75v0.90h-3.75zM15.75 129.30h7.50v0.90h-7.50zM24.00 129.30h1.50v0.90h-1.50zM26.25 129.30h6.00v0.90h-6.00zM18.00 130.73h5.25v0.90h-5.25zM24.00 130.73h2.25v0.90h-2.25zM27.00 130.73h2.25v0.90h-2.25zM30.00 130.73h3.75v0.90h-3.75zM34.50 130.73h2.25v0.90h-2.25zM37.50 130.73h2.25v0.90h-2.25zM40.50 130.73h4.50v0.90h-4.50zM45.75 130.73h4.50v0.90h-4.50zM51.00 130.73h1.50v0.90h-1.50zM53.25 130.73h3.00v0.90h-3.00zM57.00 130.73h4.50v0.90h-4.50zM20.25 132.16h5.25v0.90h-5.25zM26.25 132.16h6.00v0.90h-6.00zM33.00 132.16h3.00v0.90h-3.00zM36.75 132.16h6.75v0.90h-6.75zM44.25 132.16h5.25v0.90h-5.25zM50.25 132.16h2.25v0.90h-2.25zM53.25 132.16h4.50v0.90h-4.50zM58.50 132.16h1.50v0.90h-1.50zM60.75 132.16h0.75v0.90h-0.75zM20.25 143.60h5.25v0.90h-5.25zM26.25 143.60h3.00v0.90h-3.00zM30.00 143.60h1.50v0.90h-1.50zM32.25 143.60h1.50v0.90h-1.50zM20.25 145.03h25.50v0.90h-25.50zM21.75 146.46h3.00v0.90h-3.00zM15.75 150.75h6.00v0.90h-6.00zM22.50 150.75h1.50v0.90h-1.50zM24.75 150.75h3.00v0.90h-3.00zM28.50 150.75h2.25v0.90h-2.25zM18.00 152.18h6.75v0.90h-6.75zM25.50 152.18h3.00v0.90h-3.00zM29.25 152.18h1.50v0.90h-1.50zM31.50 152.18h2.25v0.90h-2.25zM34.50 152.18h6.00v0.90h-6.00zM41.25 152.18h5.25v0.90h-5.25zM20.25 159.33h4.50v0.90h-4.50zM20.25 160.76h25.50v0.90h-25.50zM21.75 162.19h3.75v0.90h-3.75zM15.75 166.48h4.50v0.90h-4.50zM21.00 166.48h2.25v0.90h-2.25zM24.00 166.48h3.75v0.90h-3.75zM20.25 167.91h6.75v0.90h-6.75zM27.75 167.91h5.25v0.90h-5.25zM33.75 167.91h6.75v0.90h-6.75zM41.25 167.91h3.00v0.90h-3.00zM45.00 167.91h4.50v0.90h-4.50zM50.25 167.91h3.00v0.90h-3.00zM54.00 167.91h1.50v0.90h-1.50zM56.25 167.91h5.25v0.90h-5.25zM20.25 179.35h3.00v0.90h-3.00zM24.00 179.35h2.25v0.90h-2.25zM27.00 179.35h6.75v0.90h-6.75zM34.50 179.35h4.50v0.90h-4.50zM39.75 179.35h1.50v0.90h-1.50zM20.25 180.78h25.50v0.90h-25.50zM21.75 182.21h3.75v0.90h-3.75zM15.75 186.50h5.25v0.90h-5.25zM21.75 186.50h2.25v0.90h-2.25zM24.75 186.50h1.50v0.90h-1.50zM18.00 187.93h3.00v0.90h-3.00zM21.75 187.93h6.75v0.90h-6.75zM29.25 187.93h4.50v0.90h-4.50zM34.50 187.93h6.00v0.90h-6.00zM41.25 187.93h3.75v0.90h-3.75zM45.75 187.93h3.75v0.90h-3.75zM50.25 187.93h2.25v0.90h-2.25zM53.25 187.93h3.00v0.90h-3.00zM20.25 199.37h3.75v0.90h-3.75zM24.75 199.37h4.50v0.90h-4.50zM30.00 199.37h2.25v0.90h-2.25zM20.25 200.80h25.50v0.90h-25.50zM21.75 202.23h3.00v0.90h-3.00zM15.75 206.52h6.75v0.90h-6.75zM23.25 206.52h4.50v0.90h-4.50zM28.50 206.52h1.50v0.90h-1.50zM18.00 207.95h5.25v0.90h-5.25zM24.00 207.95h3.00v0.90h-3.00zM27.75 207.95h3.75v0.90h-3.75zM32.25 207.95h4.50v0.90h-4.50zM20.25 219.39h6.75v0.90h-6.75zM27.75 219.39h1.50v0.90h-1.50zM30.00 219.39h2.25v0.90h-2.25zM20.25 220.82h25.50v0.90h-25.50zM21.75 222.25h3.75v0.90h-3.75zM15.75 226.54h3.75v0.90h-3.75zM20.25 226.54h3.75v0.90h-3.75zM24.75 226.54h3.75v0.90h-3.75zM29.25 226.54h2.25v0.90h-2.25zM18.00 227.97h3.00v0.90h-3.00zM21.75 227.97h5.25v0.90h-5.25zM27.75 227.97h3.75v0.90h-3.75zM32.25 227.97h5.25v0.90h-5.25zM38.25 227.97h4.50v0.90h-4.50zM43.50 227.97h3.75v0.90h-3.75zM48.00 227.97h1.50v0.90h-1.50zM50.25 227.97h6.00v0.90h-6.00zM57.00 227.97h3.75v0.90h-3.75zM20.25 239.41h5.25v0.90h-5.25zM26.25 239.41h6.00v0.90h-6.00zM20.25 240.84h25.50v0.90h-25.50zM21.75 242.27h3.00v0.90h-3.00zM15.75 246.56h2.25v0.90h-2.25zM18.75 246.56h1.50v0.90h-1.50zM21.00 246.56h3.00v0.90h-3.00zM24.75 246.56h3.75v0.90h-3.75zM29.25 246.56h1.50v0.90h-1.50zM31.50 246.56h3.00v0.90h-3.00zM20.25 247.99h5.25v0.90h-5.25zM26.25 247.99h6.00v0.90h-6.00zM33.00 247.99h2.25v0.90h-2.25zM36.00 247.99h2.25v0.90h-2.25zM39.00 247.99h2.25v0.90h-2.25zM42.00 247.99h4.50v0.90h-4.50zM47.25 247.99h3.75v0.90h-3.75zM51.75 247.99h6.00v0.90h-6.00zM58.50 247.99h3.00v0.90h-3.00zM20.25 255.14h2.25v0.90h-2.25zM23.25 255.14h1.50v0.90h-1.50zM20.25 256.57h25.50v0.90h-25.50zM21.75 258.00h3.75v0.90h-3.75zM15.75 262.29h2.25v0.90h-2.25zM18.75 262.29h3.00v0.90h-3.00zM22.50 262.29h6.00v0.90h-6.00zM29.25 262.29h2.25v0.90h-2.25zM18.00 263.72h3.75v0.90h-3.75zM22.50 263.72h6.00v0.90h-6.00zM29.25 263.72h1.50v0.90h-1.50zM31.50 263.72h1.50v0.90h-1.50zM33.75 263.72h3.00v0.90h-3.00zM37.50 263.72h6.00v0.90h-6.00zM44.25 263.72h6.75v0.90h-6.75zM51.75 263.72h5.25v0.90h-5.25zM57.75 263.72h2.25v0.90h-2.25zM60.75 263.72h0.75v0.90h-0.75zM20.25 270.87h3.75v0.90h-3.75zM24.75 270.87h3.75v0.90h-3.75zM20.25 272.30h25.50v0.90h-25.50zM21.75 273.73h3.75v0.90h-3.75zM15.75 278.02h6.75v0.90h-6.75zM23.25 278.02h1.50v0.90h-1.50zM25.50 278.02h6.00v0.90h-6.00zM32.25 278.02h1.50v0.90h-1.50zM34.50 278.02h2.25v0.90h-2.25zM18.00 279.45h5.25v0.90h-5.25zM24.00 279.45h3.75v0.90h-3.75zM28.50 279.45h2.25v0.90h-2.25zM31.50 279.45h5.25v0.90h-5.25zM20.25 290.89h6.00v0.90h-6.00zM27.00 290.89h3.00v0.90h-3.00zM20.25 292.32h25.50v0.90h-25.50zM21.75 293.75h3.75v0.90h-3.75zM15.75 298.04h6.00v0.90h-6.00zM22.50 298.04h3.00v0.90h-3.00zM26.25 298.04h6.00v0.90h-6.00zM33.00 298.04h1.50v0.90h-1.50zM20.25 299.47h3.00v0.90h-3.00zM24.00 299.47h3.75v0.90h-3.75zM28.50 299.47h2.25v0.90h-2.25zM31.50 299.47h6.00v0.90h-6.00zM38.25 299.47h6.75v0.90h-6.75zM45.75 299.47h6.75v0.90h-6.75zM53.25 299.47h3.00v0.90h-3.00zM57.00 299.47h3.75v0.90h-3.75zM20.25 310.91h5.25v0.90h-5.25zM26.25 310.91h5.25v0.90h-5.25zM20.25 312.34h25.50v0.90h-25.50zM21.75 313.77h3.75v0.90h-3.75zM15.75 318.06h3.75v0.90h-3.75zM20.25 318.06h6.75v0.90h-6.75zM27.75 318.06h5.25v0.90h-5.25zM20.25 319.49h3.00v0.90h-3.00zM24.00 319.49h5.25v0.90h-5.25zM30.00 319.49h3.75v0.90h-3.75zM34.50 319.49h1.50v0.90h-1.50zM36.75 319.49h5.25v0.90h-5.25zM42.75 319.49h5.25v0.90h-5.25zM48.75 319.49h3.00v0.90h-3.00zM52.50 319.49h1.50v0.90h-1.50zM54.75 319.49h3.75v0.90h-3.75zM59.25 319.49h2.25v0.90h-2.25zM20.25 326.64h3.75v0.90h-3.75zM20.25 328.07h25.50v0.90h-25.50zM21.75 329.50h3.75v0.90h-3.75zM15.75 333.79h6.00v0.90h-6.00zM20.25 335.22h3.00v0.90h-3.00zM24.00 335.22h2.25v0.90h-2.25zM27.00 335.22h6.00v0.90h-6.00zM33.75 335.22h5.25v0.90h-5.25zM39.75 335.22h6.75v0.90h-6.75zM47.25 335.22h3.00v0.90h-3.00zM51.00 335.22h3.00v0.90h-3.00zM54.75 335.22h1.50v0.90h-1.50zM57.00 335.22h1.50v0.90h-1.50zM59.25 335.22h2.25v0.90h-2.25zM20.25 346.66h3.75v0.90h-3.75zM24.75 346.66h1.50v0.90h-1.50zM27.00 346.66h3.75v0.90h-3.75zM20.25 348.09h25.50v0.90h-25.50zM21.75 349.52h3.75v0.90h-3.75zM15.75 353.81h7.50v0.90h-7.50zM24.00 353.81h3.00v0.90h-3.00zM27.75 353.81h1.50v0.90h-1.50zM30.00 353.81h2.25v0.90h-2.25zM20.25 355.24h7.50v0.90h-7.50zM28.50 355.24h3.75v0.90h-3.75zM33.00 355.24h6.75v0.90h-6.75zM40.50 355.24h6.75v0.90h-6.75zM48.00 355.24h3.00v0.90h-3.00zM51.75 355.24h6.75v0.90h-6.75zM59.25 355.24h2.25v0.90h-2.25zM20.25 366.68h3.00v0.90h-3.00zM24.00 366.68h1.50v0.90h-1.50zM26.25 366.68h6.00v0.90h-6.00zM33.00 366.68h3.00v0.90h-3.00zM36.75 366.68h1.50v0.90h-1.50zM39.00 366.68h2.25v0.90h-2.25zM20.25 368.11h25.50v0.90h-25.50zM21.75 369.54h3.00v0.90h-3.00zM15.75 373.83h2.25v0.90h-2.25zM18.75 373.83h5.25v0.90h-5.25zM24.75 373.83h6.75v0.90h-6.75zM32.25 373.83h2.25v0.90h-2.25zM35.25 373.83h4.50v0.90h-4.50zM20.25 375.26h6.75v0.90h-6.75zM27.75 375.26h5.25v0.90h-5.25zM33.75 375.26h4.50v0.90h-4.50zM39.00 375.26h6.00v0.90h-6.00zM45.75 375.26h5.25v0.90h-5.25zM51.75 375.26h3.00v0.90h-3.00zM55.50 375.26h5.25v0.90h-5.25zM20.25 382.41h6.00v0.90h-6.00zM27.00 382.41h1.50v0.90h-1.50zM29.25 382.41h3.75v0.90h-3.75zM20.25 383.84h25.50v0.90h-25.50zM21.75 385.27h3.75v0.90h-3.75z"/><path fill="#d45c6c" d="M9.00 97.84h5.25v0.90h-5.25zM9.00 99.27h9.75v0.90h-9.75zM9.00 100.70h9.75v0.90h-9.75zM9.00 104.99h6.75v0.90h-6.75zM9.00 106.42h9.75v0.90h-9.75zM9.00 107.85h9.75v0.90h-9.75zM9.00 109.28h11.25v0.90h-11.25zM9.00 110.71h5.25v0.90h-5.25zM9.00 112.14h4.50v0.90h-4.50zM9.00 113.57h5.25v0.90h-5.25zM9.00 115.00h9.75v0.90h-9.75zM9.00 116.43h9.75v0.90h-9.75zM9.00 120.72h6.75v0.90h-6.75zM9.00 122.15h9.75v0.90h-9.75zM9.00 123.58h9.75v0.90h-9.75zM9.00 125.01h11.25v0.90h-11.25zM9.00 126.44h5.25v0.90h-5.25z"/><path fill="#c08890" d="M14.25 97.84h0.75v0.90h-0.75zM28.50 97.84h0.75v0.90h-0.75zM18.75 99.27h0.75v0.90h-0.75zM18.75 100.70h0.75v0.90h-0.75zM6.00 102.13h1.50v0.90h-1.50zM6.00 103.56h0.75v0.90h-0.75zM15.75 104.99h0.75v0.90h-0.75zM21.75 104.99h0.75v0.90h-0.75zM18.75 106.42h0.75v0.90h-0.75zM38.25 106.42h0.75v0.90h-0.75zM18.75 107.85h0.75v0.90h-0.75zM45.75 107.85h0.75v0.90h-0.75zM20.25 109.28h0.75v0.90h-0.75zM25.50 109.28h0.75v0.90h-0.75zM14.25 110.71h0.75v0.90h-0.75zM23.25 110.71h0.75v0.90h-0.75zM13.50 112.14h0.75v0.90h-0.75zM22.50 112.14h0.75v0.90h-0.75zM14.25 113.57h0.75v0.90h-0.75zM22.50 113.57h0.75v0.90h-0.75zM18.75 115.00h0.75v0.90h-0.75zM18.75 116.43h0.75v0.90h-0.75zM6.00 117.86h1.50v0.90h-1.50zM6.00 119.29h0.75v0.90h-0.75zM15.75 120.72h0.75v0.90h-0.75zM21.75 120.72h0.75v0.90h-0.75zM18.75 122.15h0.75v0.90h-0.75zM33.75 122.15h0.75v0.90h-0.75zM18.75 123.58h0.75v0.90h-0.75zM45.75 123.58h0.75v0.90h-0.75zM20.25 125.01h0.75v0.90h-0.75zM25.50 125.01h0.75v0.90h-0.75zM14.25 126.44h0.75v0.90h-0.75zM23.25 126.44h0.75v0.90h-0.75z"/><path fill="#8f7fc0" d="M15.75 97.84h4.50v0.90h-4.50zM21.00 97.84h7.50v0.90h-7.50zM20.25 99.27h2.25v0.90h-2.25zM23.25 99.27h6.75v0.90h-6.75zM30.75 99.27h5.25v0.90h-5.25zM36.75 99.27h2.25v0.90h-2.25zM39.75 99.27h2.25v0.90h-2.25zM42.75 99.27h6.00v0.90h-6.00zM49.50 99.27h3.75v0.90h-3.75zM54.00 99.27h6.75v0.90h-6.75zM20.25 106.42h7.50v0.90h-7.50zM28.50 106.42h5.25v0.90h-5.25zM34.50 106.42h3.75v0.90h-3.75zM20.25 107.85h25.50v0.90h-25.50zM21.75 109.28h3.75v0.90h-3.75zM15.75 113.57h6.75v0.90h-6.75zM20.25 115.00h7.50v0.90h-7.50zM28.50 115.00h2.25v0.90h-2.25zM31.50 115.00h1.50v0.90h-1.50zM33.75 115.00h3.75v0.90h-3.75zM38.25 115.00h3.75v0.90h-3.75zM42.75 115.00h4.50v0.90h-4.50zM48.00 115.00h1.50v0.90h-1.50zM50.25 115.00h2.25v0.90h-2.25zM53.25 115.00h6.75v0.90h-6.75zM60.75 115.00h0.75v0.90h-0.75zM20.25 122.15h3.00v0.90h-3.00zM24.00 122.15h6.00v0.90h-6.00zM30.75 122.15h3.00v0.90h-3.00zM20.25 123.58h25.50v0.90h-25.50zM21.75 125.01h3.75v0.90h-3.75z"/><path fill="#8a9a8a" d="M20.25 100.70h4.50v0.90h-4.50zM17.25 104.99h4.50v0.90h-4.50zM15.75 110.71h7.50v0.90h-7.50zM15.00 112.14h7.50v0.90h-7.50zM20.25 116.43h4.50v0.90h-4.50zM17.25 120.72h4.50v0.90h-4.50zM15.75 126.44h7.50v0.90h-7.50z"/><rect x="0" y="1.00" width="15.0" height="8.50" fill="#b086cf" opacity=".8"/><rect x="0" y="97.00" width="16.0" height="30.00" fill="#cf8e9c" opacity=".8"/></svg></div>
<div class="sbtrack" style="left:563.0px"></div>
<div class="sb" style="left:565.0px"></div>
</div>
<div class="pane" style="left:603.0px;width:575.0px">
<div class="dbg" style="top:12.80px;left:44.4px;width:452.6px;background:#ffcccc"></div>
<div class="dbg" style="top:25.60px;left:44.4px;width:452.6px;background:#e7efdc"></div>
<div class="cur" style="top:0.00px;left:44.4px;width:452.6px"></div>
<div class="lns" style="top:1.50px;width:25.6px"><div>1</div><div>2</div><div>3</div><div>4</div><div>5</div><div>6</div><div>7</div><div>8</div><div>9</div><div>10</div><div>11</div><div>12</div><div>13</div><div>14</div><div>15</div><div>16</div><div>17</div><div>18</div><div>19</div><div>20</div><div>21</div><div>22</div><div>23</div><div>24</div><div>25</div><div>26</div><div>27</div><div>28</div><div>29</div></div>
<div class="brk" style="top:0.00px;left:44.4px"></div>
<div class="ig g0" style="top:12.80px;left:44.4px"></div>
<div class="ig g0" style="top:25.60px;left:44.4px"></div>
<div class="ig g0" style="top:38.40px;left:44.4px"></div>
<div class="ig g0" style="top:51.20px;left:44.4px"></div>
<div class="ig g1" style="top:51.20px;left:65.0px"></div>
<div class="ig g0" style="top:64.00px;left:44.4px"></div>
<div class="ig g1" style="top:64.00px;left:65.0px"></div>
<div class="ig g2" style="top:64.00px;left:85.6px"></div>
<div class="ig g0" style="top:76.80px;left:44.4px"></div>
<div class="ig g1" style="top:76.80px;left:65.0px"></div>
<div class="ig g2" style="top:76.80px;left:85.6px"></div>
<div class="ig g0" style="top:89.60px;left:44.4px"></div>
<div class="ig g1" style="top:89.60px;left:65.0px"></div>
<div class="ig g2" style="top:89.60px;left:85.6px"></div>
<div class="ig g0" style="top:102.40px;left:44.4px"></div>
<div class="ig g1" style="top:102.40px;left:65.0px"></div>
<div class="ig g2" style="top:102.40px;left:85.6px"></div>
<div class="ig g0" style="top:115.20px;left:44.4px"></div>
<div class="ig g1" style="top:115.20px;left:65.0px"></div>
<div class="ig g2" style="top:115.20px;left:85.6px"></div>
<div class="ig g0" style="top:128.00px;left:44.4px"></div>
<div class="ig g1" style="top:128.00px;left:65.0px"></div>
<div class="ig g2" style="top:128.00px;left:85.6px"></div>
<div class="ig g0" style="top:140.80px;left:44.4px"></div>
<div class="ig g1" style="top:140.80px;left:65.0px"></div>
<div class="ig g2" style="top:140.80px;left:85.6px"></div>
<div class="ig g0" style="top:153.60px;left:44.4px"></div>
<div class="ig g1" style="top:153.60px;left:65.0px"></div>
<div class="ig g2" style="top:153.60px;left:85.6px"></div>
<div class="ig g0" style="top:166.40px;left:44.4px"></div>
<div class="ig g1" style="top:166.40px;left:65.0px"></div>
<div class="ig g0" style="top:179.20px;left:44.4px"></div>
<div class="ig g1" style="top:179.20px;left:65.0px"></div>
<div class="ig g0" style="top:192.00px;left:44.4px"></div>
<div class="ig g1" style="top:192.00px;left:65.0px"></div>
<div class="ig g2" style="top:192.00px;left:85.6px"></div>
<div class="ig g0" style="top:204.80px;left:44.4px"></div>
<div class="ig g1" style="top:204.80px;left:65.0px"></div>
<div class="ig g2" style="top:204.80px;left:85.6px"></div>
<div class="ig g0" style="top:217.60px;left:44.4px"></div>
<div class="ig g1" style="top:217.60px;left:65.0px"></div>
<div class="ig g2" style="top:217.60px;left:85.6px"></div>
<div class="ig g0" style="top:230.40px;left:44.4px"></div>
<div class="ig g1" style="top:230.40px;left:65.0px"></div>
<div class="ig g2" style="top:230.40px;left:85.6px"></div>
<div class="ig g0" style="top:243.20px;left:44.4px"></div>
<div class="ig g1" style="top:243.20px;left:65.0px"></div>
<div class="ig g2" style="top:243.20px;left:85.6px"></div>
<div class="ig g0" style="top:256.00px;left:44.4px"></div>
<div class="ig g1" style="top:256.00px;left:65.0px"></div>
<div class="ig g2" style="top:256.00px;left:85.6px"></div>
<div class="ig g0" style="top:268.80px;left:44.4px"></div>
<div class="ig g1" style="top:268.80px;left:65.0px"></div>
<div class="ig g2" style="top:268.80px;left:85.6px"></div>
<div class="ig g0" style="top:281.60px;left:44.4px"></div>
<div class="ig g1" style="top:281.60px;left:65.0px"></div>
<div class="ig g2" style="top:281.60px;left:85.6px"></div>
<div class="ig g0" style="top:294.40px;left:44.4px"></div>
<div class="ig g1" style="top:294.40px;left:65.0px"></div>
<div class="ig g0" style="top:307.20px;left:44.4px"></div>
<div class="ig g1" style="top:307.20px;left:65.0px"></div>
<div class="ig g0" style="top:320.00px;left:44.4px"></div>
<div class="ig g1" style="top:320.00px;left:65.0px"></div>
<div class="ig g2" style="top:320.00px;left:85.6px"></div>
<div class="ig g0" style="top:332.80px;left:44.4px"></div>
<div class="ig g1" style="top:332.80px;left:65.0px"></div>
<div class="ig g2" style="top:332.80px;left:85.6px"></div>
<div class="ig g0" style="top:345.60px;left:44.4px"></div>
<div class="ig g1" style="top:345.60px;left:65.0px"></div>
<div class="ig g2" style="top:345.60px;left:85.6px"></div>
<div class="ig g0" style="top:358.40px;left:44.4px"></div>
<div class="ig g1" style="top:358.40px;left:65.0px"></div>
<div class="ig g2" style="top:358.40px;left:85.6px"></div>
<div class="code" style="left:44.4px;width:452.6px;top:2.50px"><div class="l"><span class="p">{</span></div><div class="l">    <span class="k">&quot;totalCount&quot;</span><span class="p">: </span><span class="n">21561</span><span class="p">,</span></div><div class="l">    <span class="k">&quot;totalCount&quot;</span><span class="p">: </span><span class="n">21549</span><span class="p">,</span></div><div class="l">    <span class="k">&quot;entries&quot;</span><span class="p">: </span><span class="p">[</span></div><div class="l">        <span class="p">{</span></div><div class="l">            <span class="k">&quot;eventId&quot;</span><span class="p">: </span><span class="n">892153</span><span class="p">,</span></div><div class="l">            <span class="k">&quot;channelName&quot;</span><span class="p">: </span><span class="s">&quot;PARIS PREMIERE&quot;</span><span class="p">,</span></div><div class="l">            <span class="k">&quot;channelUuid&quot;</span><span class="p">: </span><span class="s">&quot;4808980b535b77ce1e0991fbcbe51757&quot;</span><span class="p">,</span></div><div class="l">            <span class="k">&quot;channelNumber&quot;</span><span class="p">: </span><span class="s">&quot;28&quot;</span><span class="p">,</span></div><div class="l">            <span class="k">&quot;start&quot;</span><span class="p">: </span><span class="n">1607490000</span><span class="p">,</span></div><div class="l">            <span class="k">&quot;stop&quot;</span><span class="p">: </span><span class="n">1607554800</span><span class="p">,</span></div><div class="l">            <span class="k">&quot;title&quot;</span><span class="p">: </span><span class="s">&quot;Informations non disponibles&quot;</span><span class="p">,</span></div><div class="l">            <span class="k">&quot;nextEventId&quot;</span><span class="p">: </span><span class="n">895272</span><span class="p"></span></div><div class="l">        <span class="p">},</span></div><div class="l">        <span class="p">{</span></div><div class="l">            <span class="k">&quot;eventId&quot;</span><span class="p">: </span><span class="n">896688</span><span class="p">,</span></div><div class="l">            <span class="k">&quot;channelName&quot;</span><span class="p">: </span><span class="s">&quot;BBC World News Europe HD&quot;</span><span class="p">,</span></div><div class="l">            <span class="k">&quot;channelUuid&quot;</span><span class="p">: </span><span class="s">&quot;076d28b62bde84374520a90f0b6d46e6&quot;</span><span class="p">,</span></div><div class="l">            <span class="k">&quot;channelNumber&quot;</span><span class="p">: </span><span class="s">&quot;111&quot;</span><span class="p">,</span></div><div class="l">            <span class="k">&quot;start&quot;</span><span class="p">: </span><span class="n">1607490000</span><span class="p">,</span></div><div class="l">            <span class="k">&quot;stop&quot;</span><span class="p">: </span><span class="n">1607576400</span><span class="p">,</span></div><div class="l">            <span class="k">&quot;title&quot;</span><span class="p">: </span><span class="s">&quot;BBC WORLD HD&quot;</span><span class="p">,</span></div><div class="l">            <span class="k">&quot;description&quot;</span><span class="p">: </span><span class="s">&quot;Canal de información 24 horas, producido por la BBC que emite noticias&quot;</span><span class="p">,</span></div><div class="l">        <span class="p">},</span></div><div class="l">        <span class="p">{</span></div><div class="l">            <span class="k">&quot;eventId&quot;</span><span class="p">: </span><span class="n">892123</span><span class="p">,</span></div><div class="l">            <span class="k">&quot;channelName&quot;</span><span class="p">: </span><span class="s">&quot;LCI&quot;</span><span class="p">,</span></div><div class="l">            <span class="k">&quot;channelUuid&quot;</span><span class="p">: </span><span class="s">&quot;5f466844540e77d4c0ba26bdb38b46d9&quot;</span><span class="p">,</span></div><div class="l">            <span class="k">&quot;channelNumber&quot;</span><span class="p">: </span><span class="s">&quot;218&quot;</span><span class="p">,</span></div></div>
<div class="mmwrap" style="left:497.0px;width:78.0px"></div>
<div style="position:absolute;left:502.6px;top:0"><svg class="mm" width="62" height="386" viewBox="0 0 62 386"><rect x="0" y="1.50" width="62" height="1.50" fill="#ffd0d0"/><rect x="0" y="3.00" width="62" height="1.40" fill="#e4efdb"/><rect x="0" y="91.50" width="62" height="24.00" fill="#ffd5d5"/><rect x="0" y="0" width="62" height="1" fill="#cfe6f7"/><path fill="#b3b3b3" d="M0.00 0.60h0.75v0.90h-0.75zM12.00 2.03h0.75v0.90h-0.75zM17.25 2.03h0.75v0.90h-0.75zM12.00 3.46h0.75v0.90h-0.75zM17.25 3.46h0.75v0.90h-0.75zM9.75 4.89h0.75v0.90h-0.75zM11.25 4.89h0.75v0.90h-0.75zM6.00 6.32h0.75v0.90h-0.75zM15.75 7.75h0.75v0.90h-0.75zM21.75 7.75h0.75v0.90h-0.75zM18.75 9.18h0.75v0.90h-0.75zM32.25 9.18h0.75v0.90h-0.75zM18.75 10.61h0.75v0.90h-0.75zM45.75 10.61h0.75v0.90h-0.75zM20.25 12.04h0.75v0.90h-0.75zM24.75 12.04h0.75v0.90h-0.75zM14.25 13.47h0.75v0.90h-0.75zM23.25 13.47h0.75v0.90h-0.75zM13.50 14.90h0.75v0.90h-0.75zM22.50 14.90h0.75v0.90h-0.75zM14.25 16.33h0.75v0.90h-0.75zM38.25 16.33h0.75v0.90h-0.75zM18.75 17.76h0.75v0.90h-0.75zM6.00 19.19h1.50v0.90h-1.50zM6.00 20.62h0.75v0.90h-0.75zM15.75 22.05h0.75v0.90h-0.75zM21.75 22.05h0.75v0.90h-0.75zM18.75 23.48h0.75v0.90h-0.75zM39.75 23.48h0.75v0.90h-0.75zM18.75 24.91h0.75v0.90h-0.75zM45.75 24.91h0.75v0.90h-0.75zM20.25 26.34h0.75v0.90h-0.75zM25.50 26.34h0.75v0.90h-0.75zM14.25 27.77h0.75v0.90h-0.75zM23.25 27.77h0.75v0.90h-0.75zM13.50 29.20h0.75v0.90h-0.75zM22.50 29.20h0.75v0.90h-0.75zM14.25 30.63h0.75v0.90h-0.75zM26.25 30.63h0.75v0.90h-0.75zM18.75 32.06h0.75v0.90h-0.75zM6.00 33.49h1.50v0.90h-1.50zM6.00 34.92h0.75v0.90h-0.75zM15.75 36.35h0.75v0.90h-0.75zM21.75 36.35h0.75v0.90h-0.75zM18.75 37.78h0.75v0.90h-0.75zM31.50 37.78h0.75v0.90h-0.75zM18.75 39.21h0.75v0.90h-0.75zM45.75 39.21h0.75v0.90h-0.75zM20.25 40.64h0.75v0.90h-0.75zM24.75 40.64h0.75v0.90h-0.75zM14.25 42.07h0.75v0.90h-0.75zM23.25 42.07h0.75v0.90h-0.75zM13.50 43.50h0.75v0.90h-0.75zM22.50 43.50h0.75v0.90h-0.75zM14.25 44.93h0.75v0.90h-0.75zM33.75 44.93h0.75v0.90h-0.75zM18.75 46.36h0.75v0.90h-0.75zM18.75 47.79h0.75v0.90h-0.75zM6.00 49.22h1.50v0.90h-1.50zM6.00 50.65h0.75v0.90h-0.75zM15.75 52.08h0.75v0.90h-0.75zM21.75 52.08h0.75v0.90h-0.75zM18.75 53.51h0.75v0.90h-0.75zM31.50 53.51h0.75v0.90h-0.75zM18.75 54.94h0.75v0.90h-0.75zM45.75 54.94h0.75v0.90h-0.75zM20.25 56.37h0.75v0.90h-0.75zM25.50 56.37h0.75v0.90h-0.75zM14.25 57.80h0.75v0.90h-0.75zM23.25 57.80h0.75v0.90h-0.75zM13.50 59.23h0.75v0.90h-0.75zM22.50 59.23h0.75v0.90h-0.75zM14.25 60.66h0.75v0.90h-0.75zM23.25 60.66h0.75v0.90h-0.75zM18.75 62.09h0.75v0.90h-0.75zM18.75 63.52h0.75v0.90h-0.75zM6.00 64.95h1.50v0.90h-1.50zM6.00 66.38h0.75v0.90h-0.75zM15.75 67.81h0.75v0.90h-0.75zM21.75 67.81h0.75v0.90h-0.75zM18.75 69.24h0.75v0.90h-0.75zM30.00 69.24h0.75v0.90h-0.75zM18.75 70.67h0.75v0.90h-0.75zM45.75 70.67h0.75v0.90h-0.75zM20.25 72.10h0.75v0.90h-0.75zM25.50 72.10h0.75v0.90h-0.75zM14.25 73.53h0.75v0.90h-0.75zM23.25 73.53h0.75v0.90h-0.75zM13.50 74.96h0.75v0.90h-0.75zM22.50 74.96h0.75v0.90h-0.75zM14.25 76.39h0.75v0.90h-0.75zM30.00 76.39h0.75v0.90h-0.75zM16.50 77.82h0.75v0.90h-0.75zM57.75 77.82h0.75v0.90h-0.75zM18.75 79.25h0.75v0.90h-0.75zM6.00 80.68h1.50v0.90h-1.50zM6.00 82.11h0.75v0.90h-0.75zM15.75 83.54h0.75v0.90h-0.75zM21.75 83.54h0.75v0.90h-0.75zM18.75 84.97h0.75v0.90h-0.75zM40.50 84.97h0.75v0.90h-0.75zM18.75 86.40h0.75v0.90h-0.75zM45.75 86.40h0.75v0.90h-0.75zM20.25 87.83h0.75v0.90h-0.75zM25.50 87.83h0.75v0.90h-0.75zM14.25 89.26h0.75v0.90h-0.75zM23.25 89.26h0.75v0.90h-0.75zM13.50 90.69h0.75v0.90h-0.75zM22.50 90.69h0.75v0.90h-0.75zM18.75 116.43h0.75v0.90h-0.75zM33.75 116.43h0.75v0.90h-0.75zM18.75 117.86h0.75v0.90h-0.75zM45.75 117.86h0.75v0.90h-0.75zM20.25 119.29h0.75v0.90h-0.75zM25.50 119.29h0.75v0.90h-0.75zM14.25 120.72h0.75v0.90h-0.75zM23.25 120.72h0.75v0.90h-0.75zM13.50 122.15h0.75v0.90h-0.75zM22.50 122.15h0.75v0.90h-0.75zM14.25 123.58h0.75v0.90h-0.75zM32.25 123.58h0.75v0.90h-0.75zM16.50 125.01h0.75v0.90h-0.75zM18.75 126.44h0.75v0.90h-0.75zM14.25 127.87h0.75v0.90h-0.75zM15.75 127.87h0.75v0.90h-0.75zM9.00 130.73h1.50v0.90h-1.50zM18.75 132.16h0.75v0.90h-0.75zM6.00 133.59h1.50v0.90h-1.50zM6.00 135.02h0.75v0.90h-0.75zM15.75 136.45h0.75v0.90h-0.75zM21.75 136.45h0.75v0.90h-0.75zM18.75 137.88h0.75v0.90h-0.75zM33.75 137.88h0.75v0.90h-0.75zM18.75 139.31h0.75v0.90h-0.75zM45.75 139.31h0.75v0.90h-0.75zM20.25 140.74h0.75v0.90h-0.75zM24.75 140.74h0.75v0.90h-0.75zM14.25 142.17h0.75v0.90h-0.75zM23.25 142.17h0.75v0.90h-0.75zM13.50 143.60h0.75v0.90h-0.75zM22.50 143.60h0.75v0.90h-0.75zM14.25 145.03h0.75v0.90h-0.75zM30.75 145.03h0.75v0.90h-0.75zM16.50 146.46h0.75v0.90h-0.75zM46.50 146.46h0.75v0.90h-0.75zM18.75 147.89h0.75v0.90h-0.75zM6.00 149.32h1.50v0.90h-1.50zM6.00 150.75h0.75v0.90h-0.75zM15.75 152.18h0.75v0.90h-0.75zM21.75 152.18h0.75v0.90h-0.75zM18.75 153.61h0.75v0.90h-0.75zM24.75 153.61h0.75v0.90h-0.75zM18.75 155.04h0.75v0.90h-0.75zM45.75 155.04h0.75v0.90h-0.75zM20.25 156.47h0.75v0.90h-0.75zM25.50 156.47h0.75v0.90h-0.75zM14.25 157.90h0.75v0.90h-0.75zM23.25 157.90h0.75v0.90h-0.75zM13.50 159.33h0.75v0.90h-0.75zM22.50 159.33h0.75v0.90h-0.75zM14.25 160.76h0.75v0.90h-0.75zM27.75 160.76h0.75v0.90h-0.75zM18.75 162.19h0.75v0.90h-0.75zM14.25 163.62h0.75v0.90h-0.75zM15.75 163.62h0.75v0.90h-0.75zM9.00 166.48h1.50v0.90h-1.50zM18.75 167.91h0.75v0.90h-0.75zM6.00 169.34h1.50v0.90h-1.50zM6.00 170.77h0.75v0.90h-0.75zM15.75 172.20h0.75v0.90h-0.75zM21.75 172.20h0.75v0.90h-0.75zM18.75 173.63h0.75v0.90h-0.75zM41.25 173.63h0.75v0.90h-0.75zM18.75 175.06h0.75v0.90h-0.75zM45.75 175.06h0.75v0.90h-0.75zM20.25 176.49h0.75v0.90h-0.75zM25.50 176.49h0.75v0.90h-0.75zM14.25 177.92h0.75v0.90h-0.75zM23.25 177.92h0.75v0.90h-0.75zM13.50 179.35h0.75v0.90h-0.75zM22.50 179.35h0.75v0.90h-0.75zM14.25 180.78h0.75v0.90h-0.75zM26.25 180.78h0.75v0.90h-0.75zM16.50 182.21h0.75v0.90h-0.75zM56.25 182.21h0.75v0.90h-0.75zM14.25 183.64h0.75v0.90h-0.75zM15.75 183.64h0.75v0.90h-0.75zM9.00 186.50h1.50v0.90h-1.50zM18.75 187.93h0.75v0.90h-0.75zM6.00 189.36h1.50v0.90h-1.50zM6.00 190.79h0.75v0.90h-0.75zM15.75 192.22h0.75v0.90h-0.75zM21.75 192.22h0.75v0.90h-0.75zM18.75 193.65h0.75v0.90h-0.75zM32.25 193.65h0.75v0.90h-0.75zM18.75 195.08h0.75v0.90h-0.75zM45.75 195.08h0.75v0.90h-0.75zM20.25 196.51h0.75v0.90h-0.75zM24.75 196.51h0.75v0.90h-0.75zM14.25 197.94h0.75v0.90h-0.75zM23.25 197.94h0.75v0.90h-0.75zM13.50 199.37h0.75v0.90h-0.75zM22.50 199.37h0.75v0.90h-0.75zM14.25 200.80h0.75v0.90h-0.75zM30.00 200.80h0.75v0.90h-0.75zM16.50 202.23h0.75v0.90h-0.75zM36.75 202.23h0.75v0.90h-0.75zM14.25 203.66h0.75v0.90h-0.75zM15.75 203.66h0.75v0.90h-0.75zM9.00 206.52h1.50v0.90h-1.50zM18.75 207.95h0.75v0.90h-0.75zM6.00 209.38h1.50v0.90h-1.50zM6.00 210.81h0.75v0.90h-0.75zM15.75 212.24h0.75v0.90h-0.75zM21.75 212.24h0.75v0.90h-0.75zM18.75 213.67h0.75v0.90h-0.75zM32.25 213.67h0.75v0.90h-0.75zM18.75 215.10h0.75v0.90h-0.75zM45.75 215.10h0.75v0.90h-0.75zM20.25 216.53h0.75v0.90h-0.75zM25.50 216.53h0.75v0.90h-0.75zM14.25 217.96h0.75v0.90h-0.75zM23.25 217.96h0.75v0.90h-0.75zM13.50 219.39h0.75v0.90h-0.75zM22.50 219.39h0.75v0.90h-0.75zM14.25 220.82h0.75v0.90h-0.75zM31.50 220.82h0.75v0.90h-0.75zM16.50 222.25h0.75v0.90h-0.75zM60.75 222.25h0.75v0.90h-0.75zM14.25 223.68h0.75v0.90h-0.75zM15.75 223.68h0.75v0.90h-0.75zM9.00 226.54h1.50v0.90h-1.50zM18.75 227.97h0.75v0.90h-0.75zM6.00 229.40h1.50v0.90h-1.50zM6.00 230.83h0.75v0.90h-0.75zM15.75 232.26h0.75v0.90h-0.75zM21.75 232.26h0.75v0.90h-0.75zM18.75 233.69h0.75v0.90h-0.75zM32.25 233.69h0.75v0.90h-0.75zM18.75 235.12h0.75v0.90h-0.75zM45.75 235.12h0.75v0.90h-0.75zM20.25 236.55h0.75v0.90h-0.75zM24.75 236.55h0.75v0.90h-0.75zM14.25 237.98h0.75v0.90h-0.75zM23.25 237.98h0.75v0.90h-0.75zM13.50 239.41h0.75v0.90h-0.75zM22.50 239.41h0.75v0.90h-0.75zM14.25 240.84h0.75v0.90h-0.75zM34.50 240.84h0.75v0.90h-0.75zM18.75 242.27h0.75v0.90h-0.75zM18.75 243.70h0.75v0.90h-0.75zM6.00 245.13h1.50v0.90h-1.50zM6.00 246.56h0.75v0.90h-0.75zM15.75 247.99h0.75v0.90h-0.75zM21.75 247.99h0.75v0.90h-0.75zM18.75 249.42h0.75v0.90h-0.75zM24.75 249.42h0.75v0.90h-0.75zM18.75 250.85h0.75v0.90h-0.75zM45.75 250.85h0.75v0.90h-0.75zM20.25 252.28h0.75v0.90h-0.75zM25.50 252.28h0.75v0.90h-0.75zM14.25 253.71h0.75v0.90h-0.75zM23.25 253.71h0.75v0.90h-0.75zM13.50 255.14h0.75v0.90h-0.75zM22.50 255.14h0.75v0.90h-0.75zM14.25 256.57h0.75v0.90h-0.75zM31.50 256.57h0.75v0.90h-0.75zM16.50 258.00h0.75v0.90h-0.75zM18.75 259.43h0.75v0.90h-0.75zM6.00 260.86h1.50v0.90h-1.50zM6.00 262.29h0.75v0.90h-0.75zM15.75 263.72h0.75v0.90h-0.75zM21.75 263.72h0.75v0.90h-0.75zM18.75 265.15h0.75v0.90h-0.75zM28.50 265.15h0.75v0.90h-0.75zM18.75 266.58h0.75v0.90h-0.75zM45.75 266.58h0.75v0.90h-0.75zM20.25 268.01h0.75v0.90h-0.75zM25.50 268.01h0.75v0.90h-0.75zM14.25 269.44h0.75v0.90h-0.75zM23.25 269.44h0.75v0.90h-0.75zM13.50 270.87h0.75v0.90h-0.75zM22.50 270.87h0.75v0.90h-0.75zM14.25 272.30h0.75v0.90h-0.75zM36.75 272.30h0.75v0.90h-0.75zM16.50 273.73h0.75v0.90h-0.75zM36.75 273.73h0.75v0.90h-0.75zM14.25 275.16h0.75v0.90h-0.75zM15.75 275.16h0.75v0.90h-0.75zM9.00 278.02h1.50v0.90h-1.50zM18.75 279.45h0.75v0.90h-0.75zM6.00 280.88h1.50v0.90h-1.50zM6.00 282.31h0.75v0.90h-0.75zM15.75 283.74h0.75v0.90h-0.75zM21.75 283.74h0.75v0.90h-0.75zM18.75 285.17h0.75v0.90h-0.75zM30.00 285.17h0.75v0.90h-0.75zM18.75 286.60h0.75v0.90h-0.75zM45.75 286.60h0.75v0.90h-0.75zM20.25 288.03h0.75v0.90h-0.75zM25.50 288.03h0.75v0.90h-0.75zM14.25 289.46h0.75v0.90h-0.75zM23.25 289.46h0.75v0.90h-0.75zM13.50 290.89h0.75v0.90h-0.75zM22.50 290.89h0.75v0.90h-0.75zM14.25 292.32h0.75v0.90h-0.75zM34.50 292.32h0.75v0.90h-0.75zM18.75 293.75h0.75v0.90h-0.75zM14.25 295.18h0.75v0.90h-0.75zM15.75 295.18h0.75v0.90h-0.75zM9.00 298.04h1.50v0.90h-1.50zM18.75 299.47h0.75v0.90h-0.75zM6.00 300.90h1.50v0.90h-1.50zM6.00 302.33h0.75v0.90h-0.75zM15.75 303.76h0.75v0.90h-0.75zM21.75 303.76h0.75v0.90h-0.75zM18.75 305.19h0.75v0.90h-0.75zM31.50 305.19h0.75v0.90h-0.75zM18.75 306.62h0.75v0.90h-0.75zM45.75 306.62h0.75v0.90h-0.75zM20.25 308.05h0.75v0.90h-0.75zM25.50 308.05h0.75v0.90h-0.75zM14.25 309.48h0.75v0.90h-0.75zM23.25 309.48h0.75v0.90h-0.75zM13.50 310.91h0.75v0.90h-0.75zM22.50 310.91h0.75v0.90h-0.75zM14.25 312.34h0.75v0.90h-0.75zM33.00 312.34h0.75v0.90h-0.75zM18.75 313.77h0.75v0.90h-0.75zM18.75 315.20h0.75v0.90h-0.75zM6.00 316.63h1.50v0.90h-1.50zM6.00 318.06h0.75v0.90h-0.75zM15.75 319.49h0.75v0.90h-0.75zM21.75 319.49h0.75v0.90h-0.75zM18.75 320.92h0.75v0.90h-0.75zM24.00 320.92h0.75v0.90h-0.75zM18.75 322.35h0.75v0.90h-0.75zM45.75 322.35h0.75v0.90h-0.75zM20.25 323.78h0.75v0.90h-0.75zM25.50 323.78h0.75v0.90h-0.75zM14.25 325.21h0.75v0.90h-0.75zM23.25 325.21h0.75v0.90h-0.75zM13.50 326.64h0.75v0.90h-0.75zM22.50 326.64h0.75v0.90h-0.75zM14.25 328.07h0.75v0.90h-0.75zM21.75 328.07h0.75v0.90h-0.75zM18.75 329.50h0.75v0.90h-0.75zM14.25 330.93h0.75v0.90h-0.75zM15.75 330.93h0.75v0.90h-0.75zM9.00 333.79h1.50v0.90h-1.50zM18.75 335.22h0.75v0.90h-0.75zM6.00 336.65h1.50v0.90h-1.50zM6.00 338.08h0.75v0.90h-0.75zM15.75 339.51h0.75v0.90h-0.75zM21.75 339.51h0.75v0.90h-0.75zM18.75 340.94h0.75v0.90h-0.75zM30.75 340.94h0.75v0.90h-0.75zM18.75 342.37h0.75v0.90h-0.75zM45.75 342.37h0.75v0.90h-0.75zM20.25 343.80h0.75v0.90h-0.75zM25.50 343.80h0.75v0.90h-0.75zM14.25 345.23h0.75v0.90h-0.75zM23.25 345.23h0.75v0.90h-0.75zM13.50 346.66h0.75v0.90h-0.75zM22.50 346.66h0.75v0.90h-0.75zM14.25 348.09h0.75v0.90h-0.75zM32.25 348.09h0.75v0.90h-0.75zM18.75 349.52h0.75v0.90h-0.75zM14.25 350.95h0.75v0.90h-0.75zM15.75 350.95h0.75v0.90h-0.75zM9.00 353.81h1.50v0.90h-1.50zM18.75 355.24h0.75v0.90h-0.75zM6.00 356.67h1.50v0.90h-1.50zM6.00 358.10h0.75v0.90h-0.75zM15.75 359.53h0.75v0.90h-0.75zM21.75 359.53h0.75v0.90h-0.75zM18.75 360.96h0.75v0.90h-0.75zM41.25 360.96h0.75v0.90h-0.75zM18.75 362.39h0.75v0.90h-0.75zM45.75 362.39h0.75v0.90h-0.75zM20.25 363.82h0.75v0.90h-0.75zM24.75 363.82h0.75v0.90h-0.75zM14.25 365.25h0.75v0.90h-0.75zM23.25 365.25h0.75v0.90h-0.75zM13.50 366.68h0.75v0.90h-0.75zM22.50 366.68h0.75v0.90h-0.75zM14.25 368.11h0.75v0.90h-0.75zM39.75 368.11h0.75v0.90h-0.75zM18.75 369.54h0.75v0.90h-0.75zM18.75 370.97h0.75v0.90h-0.75zM6.00 372.40h1.50v0.90h-1.50zM6.00 373.83h0.75v0.90h-0.75zM15.75 375.26h0.75v0.90h-0.75zM21.75 375.26h0.75v0.90h-0.75zM18.75 376.69h0.75v0.90h-0.75zM33.00 376.69h0.75v0.90h-0.75zM18.75 378.12h0.75v0.90h-0.75zM45.75 378.12h0.75v0.90h-0.75zM20.25 379.55h0.75v0.90h-0.75zM25.50 379.55h0.75v0.90h-0.75zM14.25 380.98h0.75v0.90h-0.75zM23.25 380.98h0.75v0.90h-0.75zM13.50 382.41h0.75v0.90h-0.75zM22.50 382.41h0.75v0.90h-0.75zM14.25 383.84h0.75v0.90h-0.75zM32.25 383.84h0.75v0.90h-0.75zM18.75 385.27h0.75v0.90h-0.75z"/><path fill="#e27883" d="M3.00 2.03h9.00v0.90h-9.00zM3.00 3.46h9.00v0.90h-9.00zM3.00 4.89h6.75v0.90h-6.75zM9.00 7.75h6.75v0.90h-6.75zM9.00 9.18h9.75v0.90h-9.75zM9.00 10.61h9.75v0.90h-9.75zM9.00 12.04h11.25v0.90h-11.25zM9.00 13.47h5.25v0.90h-5.25zM9.00 14.90h4.50v0.90h-4.50zM9.00 16.33h5.25v0.90h-5.25zM9.00 17.76h9.75v0.90h-9.75zM9.00 22.05h6.75v0.90h-6.75zM9.00 23.48h9.75v0.90h-9.75zM9.00 24.91h9.75v0.90h-9.75zM9.00 26.34h11.25v0.90h-11.25zM9.00 27.77h5.25v0.90h-5.25zM9.00 29.20h4.50v0.90h-4.50zM9.00 30.63h5.25v0.90h-5.25zM9.00 32.06h9.75v0.90h-9.75zM9.00 36.35h6.75v0.90h-6.75zM9.00 37.78h9.75v0.90h-9.75zM9.00 39.21h9.75v0.90h-9.75zM9.00 40.64h11.25v0.90h-11.25zM9.00 42.07h5.25v0.90h-5.25zM9.00 43.50h4.50v0.90h-4.50zM9.00 44.93h5.25v0.90h-5.25zM9.00 46.36h9.75v0.90h-9.75zM9.00 47.79h9.75v0.90h-9.75zM9.00 52.08h6.75v0.90h-6.75zM9.00 53.51h9.75v0.90h-9.75zM9.00 54.94h9.75v0.90h-9.75zM9.00 56.37h11.25v0.90h-11.25zM9.00 57.80h5.25v0.90h-5.25zM9.00 59.23h4.50v0.90h-4.50zM9.00 60.66h5.25v0.90h-5.25zM9.00 62.09h9.75v0.90h-9.75zM9.00 63.52h9.75v0.90h-9.75zM9.00 67.81h6.75v0.90h-6.75zM9.00 69.24h9.75v0.90h-9.75zM9.00 70.67h9.75v0.90h-9.75zM9.00 72.10h11.25v0.90h-11.25zM9.00 73.53h5.25v0.90h-5.25zM9.00 74.96h4.50v0.90h-4.50zM9.00 76.39h5.25v0.90h-5.25zM9.00 77.82h7.50v0.90h-7.50zM9.00 79.25h9.75v0.90h-9.75zM9.00 83.54h6.75v0.90h-6.75zM9.00 84.97h9.75v0.90h-9.75zM9.00 86.40h9.75v0.90h-9.75zM9.00 87.83h11.25v0.90h-11.25zM9.00 89.26h5.25v0.90h-5.25zM9.00 90.69h4.50v0.90h-4.50zM9.00 116.43h9.75v0.90h-9.75zM9.00 117.86h9.75v0.90h-9.75zM9.00 119.29h11.25v0.90h-11.25zM9.00 120.72h5.25v0.90h-5.25zM9.00 122.15h4.50v0.90h-4.50zM9.00 123.58h5.25v0.90h-5.25zM9.00 125.01h7.50v0.90h-7.50zM9.00 126.44h9.75v0.90h-9.75zM9.00 127.87h5.25v0.90h-5.25zM9.00 132.16h9.75v0.90h-9.75zM9.00 136.45h6.75v0.90h-6.75zM9.00 137.88h9.75v0.90h-9.75zM9.00 139.31h9.75v0.90h-9.75zM9.00 140.74h11.25v0.90h-11.25zM9.00 142.17h5.25v0.90h-5.25zM9.00 143.60h4.50v0.90h-4.50zM9.00 145.03h5.25v0.90h-5.25zM9.00 146.46h7.50v0.90h-7.50zM9.00 147.89h9.75v0.90h-9.75zM9.00 152.18h6.75v0.90h-6.75zM9.00 153.61h9.75v0.90h-9.75zM9.00 155.04h9.75v0.90h-9.75zM9.00 156.47h11.25v0.90h-11.25zM9.00 157.90h5.25v0.90h-5.25zM9.00 159.33h4.50v0.90h-4.50zM9.00 160.76h5.25v0.90h-5.25zM9.00 162.19h9.75v0.90h-9.75zM9.00 163.62h5.25v0.90h-5.25zM9.00 167.91h9.75v0.90h-9.75zM9.00 172.20h6.75v0.90h-6.75zM9.00 173.63h9.75v0.90h-9.75zM9.00 175.06h9.75v0.90h-9.75zM9.00 176.49h11.25v0.90h-11.25zM9.00 177.92h5.25v0.90h-5.25zM9.00 179.35h4.50v0.90h-4.50zM9.00 180.78h5.25v0.90h-5.25zM9.00 182.21h7.50v0.90h-7.50zM9.00 183.64h5.25v0.90h-5.25zM9.00 187.93h9.75v0.90h-9.75zM9.00 192.22h6.75v0.90h-6.75zM9.00 193.65h9.75v0.90h-9.75zM9.00 195.08h9.75v0.90h-9.75zM9.00 196.51h11.25v0.90h-11.25zM9.00 197.94h5.25v0.90h-5.25zM9.00 199.37h4.50v0.90h-4.50zM9.00 200.80h5.25v0.90h-5.25zM9.00 202.23h7.50v0.90h-7.50zM9.00 203.66h5.25v0.90h-5.25zM9.00 207.95h9.75v0.90h-9.75zM9.00 212.24h6.75v0.90h-6.75zM9.00 213.67h9.75v0.90h-9.75zM9.00 215.10h9.75v0.90h-9.75zM9.00 216.53h11.25v0.90h-11.25zM9.00 217.96h5.25v0.90h-5.25zM9.00 219.39h4.50v0.90h-4.50zM9.00 220.82h5.25v0.90h-5.25zM9.00 222.25h7.50v0.90h-7.50zM9.00 223.68h5.25v0.90h-5.25zM9.00 227.97h9.75v0.90h-9.75zM9.00 232.26h6.75v0.90h-6.75zM9.00 233.69h9.75v0.90h-9.75zM9.00 235.12h9.75v0.90h-9.75zM9.00 236.55h11.25v0.90h-11.25zM9.00 237.98h5.25v0.90h-5.25zM9.00 239.41h4.50v0.90h-4.50zM9.00 240.84h5.25v0.90h-5.25zM9.00 242.27h9.75v0.90h-9.75zM9.00 243.70h9.75v0.90h-9.75zM9.00 247.99h6.75v0.90h-6.75zM9.00 249.42h9.75v0.90h-9.75zM9.00 250.85h9.75v0.90h-9.75zM9.00 252.28h11.25v0.90h-11.25zM9.00 253.71h5.25v0.90h-5.25zM9.00 255.14h4.50v0.90h-4.50zM9.00 256.57h5.25v0.90h-5.25zM9.00 258.00h7.50v0.90h-7.50zM9.00 259.43h9.75v0.90h-9.75zM9.00 263.72h6.75v0.90h-6.75zM9.00 265.15h9.75v0.90h-9.75zM9.00 266.58h9.75v0.90h-9.75zM9.00 268.01h11.25v0.90h-11.25zM9.00 269.44h5.25v0.90h-5.25zM9.00 270.87h4.50v0.90h-4.50zM9.00 272.30h5.25v0.90h-5.25zM9.00 273.73h7.50v0.90h-7.50zM9.00 275.16h5.25v0.90h-5.25zM9.00 279.45h9.75v0.90h-9.75zM9.00 283.74h6.75v0.90h-6.75zM9.00 285.17h9.75v0.90h-9.75zM9.00 286.60h9.75v0.90h-9.75zM9.00 288.03h11.25v0.90h-11.25zM9.00 289.46h5.25v0.90h-5.25zM9.00 290.89h4.50v0.90h-4.50zM9.00 292.32h5.25v0.90h-5.25zM9.00 293.75h9.75v0.90h-9.75zM9.00 295.18h5.25v0.90h-5.25zM9.00 299.47h9.75v0.90h-9.75zM9.00 303.76h6.75v0.90h-6.75zM9.00 305.19h9.75v0.90h-9.75zM9.00 306.62h9.75v0.90h-9.75zM9.00 308.05h11.25v0.90h-11.25zM9.00 309.48h5.25v0.90h-5.25zM9.00 310.91h4.50v0.90h-4.50zM9.00 312.34h5.25v0.90h-5.25zM9.00 313.77h9.75v0.90h-9.75zM9.00 315.20h9.75v0.90h-9.75zM9.00 319.49h6.75v0.90h-6.75zM9.00 320.92h9.75v0.90h-9.75zM9.00 322.35h9.75v0.90h-9.75zM9.00 323.78h11.25v0.90h-11.25zM9.00 325.21h5.25v0.90h-5.25zM9.00 326.64h4.50v0.90h-4.50zM9.00 328.07h5.25v0.90h-5.25zM9.00 329.50h9.75v0.90h-9.75zM9.00 330.93h5.25v0.90h-5.25zM9.00 335.22h9.75v0.90h-9.75zM9.00 339.51h6.75v0.90h-6.75zM9.00 340.94h9.75v0.90h-9.75zM9.00 342.37h9.75v0.90h-9.75zM9.00 343.80h11.25v0.90h-11.25zM9.00 345.23h5.25v0.90h-5.25zM9.00 346.66h4.50v0.90h-4.50zM9.00 348.09h5.25v0.90h-5.25zM9.00 349.52h9.75v0.90h-9.75zM9.00 350.95h5.25v0.90h-5.25zM9.00 355.24h9.75v0.90h-9.75zM9.00 359.53h6.75v0.90h-6.75zM9.00 360.96h9.75v0.90h-9.75zM9.00 362.39h9.75v0.90h-9.75zM9.00 363.82h11.25v0.90h-11.25zM9.00 365.25h5.25v0.90h-5.25zM9.00 366.68h4.50v0.90h-4.50zM9.00 368.11h5.25v0.90h-5.25zM9.00 369.54h9.75v0.90h-9.75zM9.00 370.97h9.75v0.90h-9.75zM9.00 375.26h6.75v0.90h-6.75zM9.00 376.69h9.75v0.90h-9.75zM9.00 378.12h9.75v0.90h-9.75zM9.00 379.55h11.25v0.90h-11.25zM9.00 380.98h5.25v0.90h-5.25zM9.00 382.41h4.50v0.90h-4.50zM9.00 383.84h5.25v0.90h-5.25zM9.00 385.27h9.75v0.90h-9.75z"/><path fill="#5cbf98" d="M13.50 2.03h3.75v0.90h-3.75zM13.50 3.46h3.75v0.90h-3.75zM17.25 7.75h4.50v0.90h-4.50zM15.75 13.47h7.50v0.90h-7.50zM15.00 14.90h7.50v0.90h-7.50zM20.25 17.76h4.50v0.90h-4.50zM17.25 22.05h4.50v0.90h-4.50zM15.75 27.77h7.50v0.90h-7.50zM15.00 29.20h7.50v0.90h-7.50zM17.25 36.35h4.50v0.90h-4.50zM15.75 42.07h7.50v0.90h-7.50zM15.00 43.50h7.50v0.90h-7.50zM20.25 47.79h4.50v0.90h-4.50zM17.25 52.08h4.50v0.90h-4.50zM15.75 57.80h7.50v0.90h-7.50zM15.00 59.23h7.50v0.90h-7.50zM20.25 63.52h4.50v0.90h-4.50zM17.25 67.81h4.50v0.90h-4.50zM15.75 73.53h7.50v0.90h-7.50zM15.00 74.96h7.50v0.90h-7.50zM20.25 79.25h4.50v0.90h-4.50zM17.25 83.54h4.50v0.90h-4.50zM15.75 89.26h7.50v0.90h-7.50zM15.00 90.69h7.50v0.90h-7.50zM15.75 120.72h7.50v0.90h-7.50zM15.00 122.15h7.50v0.90h-7.50zM12.00 129.30h1.50v0.90h-1.50zM20.25 132.16h4.50v0.90h-4.50zM17.25 136.45h4.50v0.90h-4.50zM15.75 142.17h7.50v0.90h-7.50zM15.00 143.60h7.50v0.90h-7.50zM20.25 147.89h4.50v0.90h-4.50zM17.25 152.18h4.50v0.90h-4.50zM15.75 157.90h7.50v0.90h-7.50zM15.00 159.33h7.50v0.90h-7.50zM12.00 165.05h2.25v0.90h-2.25zM20.25 167.91h4.50v0.90h-4.50zM17.25 172.20h4.50v0.90h-4.50zM15.75 177.92h7.50v0.90h-7.50zM15.00 179.35h7.50v0.90h-7.50zM12.00 185.07h2.25v0.90h-2.25zM20.25 187.93h4.50v0.90h-4.50zM17.25 192.22h4.50v0.90h-4.50zM15.75 197.94h7.50v0.90h-7.50zM15.00 199.37h7.50v0.90h-7.50zM12.00 205.09h1.50v0.90h-1.50zM20.25 207.95h4.50v0.90h-4.50zM17.25 212.24h4.50v0.90h-4.50zM15.75 217.96h7.50v0.90h-7.50zM15.00 219.39h7.50v0.90h-7.50zM12.00 225.11h2.25v0.90h-2.25zM20.25 227.97h4.50v0.90h-4.50zM17.25 232.26h4.50v0.90h-4.50zM15.75 237.98h7.50v0.90h-7.50zM15.00 239.41h7.50v0.90h-7.50zM20.25 243.70h4.50v0.90h-4.50zM17.25 247.99h4.50v0.90h-4.50zM15.75 253.71h7.50v0.90h-7.50zM15.00 255.14h7.50v0.90h-7.50zM20.25 259.43h4.50v0.90h-4.50zM17.25 263.72h4.50v0.90h-4.50zM15.75 269.44h7.50v0.90h-7.50zM15.00 270.87h7.50v0.90h-7.50zM12.00 276.59h1.50v0.90h-1.50zM20.25 279.45h4.50v0.90h-4.50zM17.25 283.74h4.50v0.90h-4.50zM15.75 289.46h7.50v0.90h-7.50zM15.00 290.89h7.50v0.90h-7.50zM12.00 296.61h2.25v0.90h-2.25zM20.25 299.47h4.50v0.90h-4.50zM17.25 303.76h4.50v0.90h-4.50zM15.75 309.48h7.50v0.90h-7.50zM15.00 310.91h7.50v0.90h-7.50zM20.25 315.20h4.50v0.90h-4.50zM17.25 319.49h4.50v0.90h-4.50zM15.75 325.21h7.50v0.90h-7.50zM15.00 326.64h7.50v0.90h-7.50zM12.00 332.36h2.25v0.90h-2.25zM20.25 335.22h4.50v0.90h-4.50zM17.25 339.51h4.50v0.90h-4.50zM15.75 345.23h7.50v0.90h-7.50zM15.00 346.66h7.50v0.90h-7.50zM12.00 352.38h2.25v0.90h-2.25zM20.25 355.24h4.50v0.90h-4.50zM17.25 359.53h4.50v0.90h-4.50zM15.75 365.25h7.50v0.90h-7.50zM15.00 366.68h7.50v0.90h-7.50zM20.25 370.97h4.50v0.90h-4.50zM17.25 375.26h4.50v0.90h-4.50zM15.75 380.98h7.50v0.90h-7.50zM15.00 382.41h7.50v0.90h-7.50z"/><path fill="#86aede" d="M20.25 9.18h4.50v0.90h-4.50zM25.50 9.18h6.75v0.90h-6.75zM20.25 10.61h25.50v0.90h-25.50zM21.75 12.04h3.00v0.90h-3.00zM15.75 16.33h9.75v0.90h-9.75zM26.25 16.33h2.25v0.90h-2.25zM29.25 16.33h9.00v0.90h-9.00zM20.25 23.48h3.00v0.90h-3.00zM24.00 23.48h3.75v0.90h-3.75zM28.50 23.48h3.00v0.90h-3.00zM32.25 23.48h4.50v0.90h-4.50zM37.50 23.48h2.25v0.90h-2.25zM20.25 24.91h25.50v0.90h-25.50zM21.75 26.34h3.75v0.90h-3.75zM15.75 30.63h3.00v0.90h-3.00zM19.50 30.63h3.75v0.90h-3.75zM24.00 30.63h2.25v0.90h-2.25zM20.25 32.06h4.50v0.90h-4.50zM25.50 32.06h1.50v0.90h-1.50zM27.75 32.06h8.25v0.90h-8.25zM36.75 32.06h1.50v0.90h-1.50zM39.00 32.06h4.50v0.90h-4.50zM44.25 32.06h6.75v0.90h-6.75zM51.75 32.06h2.25v0.90h-2.25zM54.75 32.06h1.50v0.90h-1.50zM57.00 32.06h2.25v0.90h-2.25zM60.00 32.06h1.50v0.90h-1.50zM20.25 37.78h3.75v0.90h-3.75zM24.75 37.78h6.75v0.90h-6.75zM20.25 39.21h25.50v0.90h-25.50zM21.75 40.64h3.00v0.90h-3.00zM15.75 44.93h3.00v0.90h-3.00zM19.50 44.93h1.50v0.90h-1.50zM21.75 44.93h3.75v0.90h-3.75zM26.25 44.93h7.50v0.90h-7.50zM20.25 46.36h6.00v0.90h-6.00zM27.00 46.36h6.75v0.90h-6.75zM34.50 46.36h6.75v0.90h-6.75zM42.00 46.36h5.25v0.90h-5.25zM48.00 46.36h4.50v0.90h-4.50zM53.25 46.36h3.75v0.90h-3.75zM57.75 46.36h3.00v0.90h-3.00zM20.25 53.51h3.75v0.90h-3.75zM24.75 53.51h6.75v0.90h-6.75zM20.25 54.94h25.50v0.90h-25.50zM21.75 56.37h3.75v0.90h-3.75zM15.75 60.66h3.75v0.90h-3.75zM20.25 60.66h3.00v0.90h-3.00zM20.25 62.09h3.75v0.90h-3.75zM24.75 62.09h6.00v0.90h-6.00zM31.50 62.09h4.50v0.90h-4.50zM36.75 62.09h6.00v0.90h-6.00zM43.50 62.09h5.25v0.90h-5.25zM49.50 62.09h6.00v0.90h-6.00zM56.25 62.09h3.75v0.90h-3.75zM60.75 62.09h0.75v0.90h-0.75zM20.25 69.24h5.25v0.90h-5.25zM26.25 69.24h1.50v0.90h-1.50zM28.50 69.24h1.50v0.90h-1.50zM20.25 70.67h25.50v0.90h-25.50zM21.75 72.10h3.75v0.90h-3.75zM15.75 76.39h6.00v0.90h-6.00zM22.50 76.39h7.50v0.90h-7.50zM18.00 77.82h7.50v0.90h-7.50zM26.25 77.82h6.75v0.90h-6.75zM33.75 77.82h6.75v0.90h-6.75zM41.25 77.82h4.50v0.90h-4.50zM46.50 77.82h2.25v0.90h-2.25zM49.50 77.82h3.00v0.90h-3.00zM53.25 77.82h2.25v0.90h-2.25zM56.25 77.82h1.50v0.90h-1.50zM20.25 84.97h3.75v0.90h-3.75zM24.75 84.97h1.50v0.90h-1.50zM27.00 84.97h3.75v0.90h-3.75zM31.50 84.97h5.25v0.90h-5.25zM37.50 84.97h3.00v0.90h-3.00zM20.25 86.40h25.50v0.90h-25.50zM21.75 87.83h3.75v0.90h-3.75zM20.25 116.43h3.00v0.90h-3.00zM24.00 116.43h6.00v0.90h-6.00zM30.75 116.43h3.00v0.90h-3.00zM20.25 117.86h25.50v0.90h-25.50zM21.75 119.29h3.75v0.90h-3.75zM15.75 123.58h7.50v0.90h-7.50zM24.00 123.58h1.50v0.90h-1.50zM26.25 123.58h6.00v0.90h-6.00zM18.00 125.01h5.25v0.90h-5.25zM24.00 125.01h2.25v0.90h-2.25zM27.00 125.01h2.25v0.90h-2.25zM30.00 125.01h3.75v0.90h-3.75zM34.50 125.01h2.25v0.90h-2.25zM37.50 125.01h2.25v0.90h-2.25zM40.50 125.01h4.50v0.90h-4.50zM45.75 125.01h4.50v0.90h-4.50zM51.00 125.01h1.50v0.90h-1.50zM53.25 125.01h3.00v0.90h-3.00zM57.00 125.01h4.50v0.90h-4.50zM20.25 126.44h5.25v0.90h-5.25zM26.25 126.44h6.00v0.90h-6.00zM33.00 126.44h3.00v0.90h-3.00zM36.75 126.44h6.75v0.90h-6.75zM44.25 126.44h5.25v0.90h-5.25zM50.25 126.44h2.25v0.90h-2.25zM53.25 126.44h4.50v0.90h-4.50zM58.50 126.44h1.50v0.90h-1.50zM60.75 126.44h0.75v0.90h-0.75zM20.25 137.88h5.25v0.90h-5.25zM26.25 137.88h3.00v0.90h-3.00zM30.00 137.88h1.50v0.90h-1.50zM32.25 137.88h1.50v0.90h-1.50zM20.25 139.31h25.50v0.90h-25.50zM21.75 140.74h3.00v0.90h-3.00zM15.75 145.03h6.00v0.90h-6.00zM22.50 145.03h1.50v0.90h-1.50zM24.75 145.03h3.00v0.90h-3.00zM28.50 145.03h2.25v0.90h-2.25zM18.00 146.46h6.75v0.90h-6.75zM25.50 146.46h3.00v0.90h-3.00zM29.25 146.46h1.50v0.90h-1.50zM31.50 146.46h2.25v0.90h-2.25zM34.50 146.46h6.00v0.90h-6.00zM41.25 146.46h5.25v0.90h-5.25zM20.25 153.61h4.50v0.90h-4.50zM20.25 155.04h25.50v0.90h-25.50zM21.75 156.47h3.75v0.90h-3.75zM15.75 160.76h4.50v0.90h-4.50zM21.00 160.76h2.25v0.90h-2.25zM24.00 160.76h3.75v0.90h-3.75zM20.25 162.19h6.75v0.90h-6.75zM27.75 162.19h5.25v0.90h-5.25zM33.75 162.19h6.75v0.90h-6.75zM41.25 162.19h3.00v0.90h-3.00zM45.00 162.19h4.50v0.90h-4.50zM50.25 162.19h3.00v0.90h-3.00zM54.00 162.19h1.50v0.90h-1.50zM56.25 162.19h5.25v0.90h-5.25zM20.25 173.63h3.00v0.90h-3.00zM24.00 173.63h2.25v0.90h-2.25zM27.00 173.63h6.75v0.90h-6.75zM34.50 173.63h4.50v0.90h-4.50zM39.75 173.63h1.50v0.90h-1.50zM20.25 175.06h25.50v0.90h-25.50zM21.75 176.49h3.75v0.90h-3.75zM15.75 180.78h5.25v0.90h-5.25zM21.75 180.78h2.25v0.90h-2.25zM24.75 180.78h1.50v0.90h-1.50zM18.00 182.21h3.00v0.90h-3.00zM21.75 182.21h6.75v0.90h-6.75zM29.25 182.21h4.50v0.90h-4.50zM34.50 182.21h6.00v0.90h-6.00zM41.25 182.21h3.75v0.90h-3.75zM45.75 182.21h3.75v0.90h-3.75zM50.25 182.21h2.25v0.90h-2.25zM53.25 182.21h3.00v0.90h-3.00zM20.25 193.65h3.75v0.90h-3.75zM24.75 193.65h4.50v0.90h-4.50zM30.00 193.65h2.25v0.90h-2.25zM20.25 195.08h25.50v0.90h-25.50zM21.75 196.51h3.00v0.90h-3.00zM15.75 200.80h6.75v0.90h-6.75zM23.25 200.80h4.50v0.90h-4.50zM28.50 200.80h1.50v0.90h-1.50zM18.00 202.23h5.25v0.90h-5.25zM24.00 202.23h3.00v0.90h-3.00zM27.75 202.23h3.75v0.90h-3.75zM32.25 202.23h4.50v0.90h-4.50zM20.25 213.67h6.75v0.90h-6.75zM27.75 213.67h1.50v0.90h-1.50zM30.00 213.67h2.25v0.90h-2.25zM20.25 215.10h25.50v0.90h-25.50zM21.75 216.53h3.75v0.90h-3.75zM15.75 220.82h3.75v0.90h-3.75zM20.25 220.82h3.75v0.90h-3.75zM24.75 220.82h3.75v0.90h-3.75zM29.25 220.82h2.25v0.90h-2.25zM18.00 222.25h3.00v0.90h-3.00zM21.75 222.25h5.25v0.90h-5.25zM27.75 222.25h3.75v0.90h-3.75zM32.25 222.25h5.25v0.90h-5.25zM38.25 222.25h4.50v0.90h-4.50zM43.50 222.25h3.75v0.90h-3.75zM48.00 222.25h1.50v0.90h-1.50zM50.25 222.25h6.00v0.90h-6.00zM57.00 222.25h3.75v0.90h-3.75zM20.25 233.69h5.25v0.90h-5.25zM26.25 233.69h6.00v0.90h-6.00zM20.25 235.12h25.50v0.90h-25.50zM21.75 236.55h3.00v0.90h-3.00zM15.75 240.84h2.25v0.90h-2.25zM18.75 240.84h1.50v0.90h-1.50zM21.00 240.84h3.00v0.90h-3.00zM24.75 240.84h3.75v0.90h-3.75zM29.25 240.84h1.50v0.90h-1.50zM31.50 240.84h3.00v0.90h-3.00zM20.25 242.27h5.25v0.90h-5.25zM26.25 242.27h6.00v0.90h-6.00zM33.00 242.27h2.25v0.90h-2.25zM36.00 242.27h2.25v0.90h-2.25zM39.00 242.27h2.25v0.90h-2.25zM42.00 242.27h4.50v0.90h-4.50zM47.25 242.27h3.75v0.90h-3.75zM51.75 242.27h6.00v0.90h-6.00zM58.50 242.27h3.00v0.90h-3.00zM20.25 249.42h2.25v0.90h-2.25zM23.25 249.42h1.50v0.90h-1.50zM20.25 250.85h25.50v0.90h-25.50zM21.75 252.28h3.75v0.90h-3.75zM15.75 256.57h2.25v0.90h-2.25zM18.75 256.57h3.00v0.90h-3.00zM22.50 256.57h6.00v0.90h-6.00zM29.25 256.57h2.25v0.90h-2.25zM18.00 258.00h3.75v0.90h-3.75zM22.50 258.00h6.00v0.90h-6.00zM29.25 258.00h1.50v0.90h-1.50zM31.50 258.00h1.50v0.90h-1.50zM33.75 258.00h3.00v0.90h-3.00zM37.50 258.00h6.00v0.90h-6.00zM44.25 258.00h6.75v0.90h-6.75zM51.75 258.00h5.25v0.90h-5.25zM57.75 258.00h2.25v0.90h-2.25zM60.75 258.00h0.75v0.90h-0.75zM20.25 265.15h3.75v0.90h-3.75zM24.75 265.15h3.75v0.90h-3.75zM20.25 266.58h25.50v0.90h-25.50zM21.75 268.01h3.75v0.90h-3.75zM15.75 272.30h6.75v0.90h-6.75zM23.25 272.30h1.50v0.90h-1.50zM25.50 272.30h6.00v0.90h-6.00zM32.25 272.30h1.50v0.90h-1.50zM34.50 272.30h2.25v0.90h-2.25zM18.00 273.73h5.25v0.90h-5.25zM24.00 273.73h3.75v0.90h-3.75zM28.50 273.73h2.25v0.90h-2.25zM31.50 273.73h5.25v0.90h-5.25zM20.25 285.17h6.00v0.90h-6.00zM27.00 285.17h3.00v0.90h-3.00zM20.25 286.60h25.50v0.90h-25.50zM21.75 288.03h3.75v0.90h-3.75zM15.75 292.32h6.00v0.90h-6.00zM22.50 292.32h3.00v0.90h-3.00zM26.25 292.32h6.00v0.90h-6.00zM33.00 292.32h1.50v0.90h-1.50zM20.25 293.75h3.00v0.90h-3.00zM24.00 293.75h3.75v0.90h-3.75zM28.50 293.75h2.25v0.90h-2.25zM31.50 293.75h6.00v0.90h-6.00zM38.25 293.75h6.75v0.90h-6.75zM45.75 293.75h6.75v0.90h-6.75zM53.25 293.75h3.00v0.90h-3.00zM57.00 293.75h3.75v0.90h-3.75zM20.25 305.19h5.25v0.90h-5.25zM26.25 305.19h5.25v0.90h-5.25zM20.25 306.62h25.50v0.90h-25.50zM21.75 308.05h3.75v0.90h-3.75zM15.75 312.34h3.75v0.90h-3.75zM20.25 312.34h6.75v0.90h-6.75zM27.75 312.34h5.25v0.90h-5.25zM20.25 313.77h3.00v0.90h-3.00zM24.00 313.77h5.25v0.90h-5.25zM30.00 313.77h3.75v0.90h-3.75zM34.50 313.77h1.50v0.90h-1.50zM36.75 313.77h5.25v0.90h-5.25zM42.75 313.77h5.25v0.90h-5.25zM48.75 313.77h3.00v0.90h-3.00zM52.50 313.77h1.50v0.90h-1.50zM54.75 313.77h3.75v0.90h-3.75zM59.25 313.77h2.25v0.90h-2.25zM20.25 320.92h3.75v0.90h-3.75zM20.25 322.35h25.50v0.90h-25.50zM21.75 323.78h3.75v0.90h-3.75zM15.75 328.07h6.00v0.90h-6.00zM20.25 329.50h3.00v0.90h-3.00zM24.00 329.50h2.25v0.90h-2.25zM27.00 329.50h6.00v0.90h-6.00zM33.75 329.50h5.25v0.90h-5.25zM39.75 329.50h6.75v0.90h-6.75zM47.25 329.50h3.00v0.90h-3.00zM51.00 329.50h3.00v0.90h-3.00zM54.75 329.50h1.50v0.90h-1.50zM57.00 329.50h1.50v0.90h-1.50zM59.25 329.50h2.25v0.90h-2.25zM20.25 340.94h3.75v0.90h-3.75zM24.75 340.94h1.50v0.90h-1.50zM27.00 340.94h3.75v0.90h-3.75zM20.25 342.37h25.50v0.90h-25.50zM21.75 343.80h3.75v0.90h-3.75zM15.75 348.09h7.50v0.90h-7.50zM24.00 348.09h3.00v0.90h-3.00zM27.75 348.09h1.50v0.90h-1.50zM30.00 348.09h2.25v0.90h-2.25zM20.25 349.52h7.50v0.90h-7.50zM28.50 349.52h3.75v0.90h-3.75zM33.00 349.52h6.75v0.90h-6.75zM40.50 349.52h6.75v0.90h-6.75zM48.00 349.52h3.00v0.90h-3.00zM51.75 349.52h6.75v0.90h-6.75zM59.25 349.52h2.25v0.90h-2.25zM20.25 360.96h3.00v0.90h-3.00zM24.00 360.96h1.50v0.90h-1.50zM26.25 360.96h6.00v0.90h-6.00zM33.00 360.96h3.00v0.90h-3.00zM36.75 360.96h1.50v0.90h-1.50zM39.00 360.96h2.25v0.90h-2.25zM20.25 362.39h25.50v0.90h-25.50zM21.75 363.82h3.00v0.90h-3.00zM15.75 368.11h2.25v0.90h-2.25zM18.75 368.11h5.25v0.90h-5.25zM24.75 368.11h6.75v0.90h-6.75zM32.25 368.11h2.25v0.90h-2.25zM35.25 368.11h4.50v0.90h-4.50zM20.25 369.54h6.75v0.90h-6.75zM27.75 369.54h5.25v0.90h-5.25zM33.75 369.54h4.50v0.90h-4.50zM39.00 369.54h6.00v0.90h-6.00zM45.75 369.54h5.25v0.90h-5.25zM51.75 369.54h3.00v0.90h-3.00zM55.50 369.54h5.25v0.90h-5.25zM20.25 376.69h6.00v0.90h-6.00zM27.00 376.69h1.50v0.90h-1.50zM29.25 376.69h3.75v0.90h-3.75zM20.25 378.12h25.50v0.90h-25.50zM21.75 379.55h3.75v0.90h-3.75zM15.75 383.84h7.50v0.90h-7.50zM24.00 383.84h3.75v0.90h-3.75zM28.50 383.84h3.75v0.90h-3.75zM20.25 385.27h2.25v0.90h-2.25zM23.25 385.27h1.50v0.90h-1.50zM25.50 385.27h6.00v0.90h-6.00zM32.25 385.27h3.00v0.90h-3.00zM36.00 385.27h3.75v0.90h-3.75zM40.50 385.27h3.00v0.90h-3.00zM44.25 385.27h1.50v0.90h-1.50zM46.50 385.27h2.25v0.90h-2.25zM49.50 385.27h1.50v0.90h-1.50zM51.75 385.27h3.75v0.90h-3.75zM56.25 385.27h3.00v0.90h-3.00zM60.00 385.27h1.50v0.90h-1.50z"/><path fill="#f0303f" d="M9.00 92.12h5.25v0.90h-5.25zM9.00 93.55h9.75v0.90h-9.75zM9.00 94.98h9.75v0.90h-9.75zM9.00 99.27h6.75v0.90h-6.75zM9.00 100.70h9.75v0.90h-9.75zM9.00 102.13h9.75v0.90h-9.75zM9.00 103.56h11.25v0.90h-11.25zM9.00 104.99h5.25v0.90h-5.25zM9.00 106.42h4.50v0.90h-4.50zM9.00 107.85h5.25v0.90h-5.25zM9.00 109.28h9.75v0.90h-9.75zM9.00 110.71h9.75v0.90h-9.75zM9.00 115.00h6.75v0.90h-6.75z"/><path fill="#e06070" d="M14.25 92.12h0.75v0.90h-0.75zM28.50 92.12h0.75v0.90h-0.75zM18.75 93.55h0.75v0.90h-0.75zM18.75 94.98h0.75v0.90h-0.75zM6.00 96.41h1.50v0.90h-1.50zM6.00 97.84h0.75v0.90h-0.75zM15.75 99.27h0.75v0.90h-0.75zM21.75 99.27h0.75v0.90h-0.75zM18.75 100.70h0.75v0.90h-0.75zM38.25 100.70h0.75v0.90h-0.75zM18.75 102.13h0.75v0.90h-0.75zM45.75 102.13h0.75v0.90h-0.75zM20.25 103.56h0.75v0.90h-0.75zM25.50 103.56h0.75v0.90h-0.75zM14.25 104.99h0.75v0.90h-0.75zM23.25 104.99h0.75v0.90h-0.75zM13.50 106.42h0.75v0.90h-0.75zM22.50 106.42h0.75v0.90h-0.75zM14.25 107.85h0.75v0.90h-0.75zM22.50 107.85h0.75v0.90h-0.75zM18.75 109.28h0.75v0.90h-0.75zM18.75 110.71h0.75v0.90h-0.75zM6.00 112.14h1.50v0.90h-1.50zM6.00 113.57h0.75v0.90h-0.75zM15.75 115.00h0.75v0.90h-0.75zM21.75 115.00h0.75v0.90h-0.75z"/><path fill="#e03040" d="M15.75 92.12h4.50v0.90h-4.50zM21.00 92.12h7.50v0.90h-7.50zM20.25 93.55h2.25v0.90h-2.25zM23.25 93.55h6.75v0.90h-6.75zM30.75 93.55h5.25v0.90h-5.25zM36.75 93.55h2.25v0.90h-2.25zM39.75 93.55h2.25v0.90h-2.25zM42.75 93.55h6.00v0.90h-6.00zM49.50 93.55h3.75v0.90h-3.75zM54.00 93.55h6.75v0.90h-6.75zM20.25 100.70h7.50v0.90h-7.50zM28.50 100.70h5.25v0.90h-5.25zM34.50 100.70h3.75v0.90h-3.75zM20.25 102.13h25.50v0.90h-25.50zM21.75 103.56h3.75v0.90h-3.75zM15.75 107.85h6.75v0.90h-6.75zM20.25 109.28h7.50v0.90h-7.50zM28.50 109.28h2.25v0.90h-2.25zM31.50 109.28h1.50v0.90h-1.50zM33.75 109.28h3.75v0.90h-3.75zM38.25 109.28h3.75v0.90h-3.75zM42.75 109.28h4.50v0.90h-4.50zM48.00 109.28h1.50v0.90h-1.50zM50.25 109.28h2.25v0.90h-2.25zM53.25 109.28h6.75v0.90h-6.75zM60.75 109.28h0.75v0.90h-0.75z"/><path fill="#e04a50" d="M20.25 94.98h4.50v0.90h-4.50zM17.25 99.27h4.50v0.90h-4.50zM15.75 104.99h7.50v0.90h-7.50zM15.00 106.42h7.50v0.90h-7.50zM20.25 110.71h4.50v0.90h-4.50zM17.25 115.00h4.50v0.90h-4.50z"/><rect x="0" y="91.50" width="7.0" height="24.00" fill="#ff4d5c" opacity=".8"/></svg></div>
<div class="sbtrack" style="left:566.0px"></div>
<div class="sb" style="left:568.0px"></div>
</div>
</div>
<div style="position:absolute;left:602px;top:27px;width:1px;height:33px;background:#3f4855"></div>
<div style="position:absolute;left:602px;top:60px;width:1px;height:360px;background:#8e8e8e"></div>
</body></html>
